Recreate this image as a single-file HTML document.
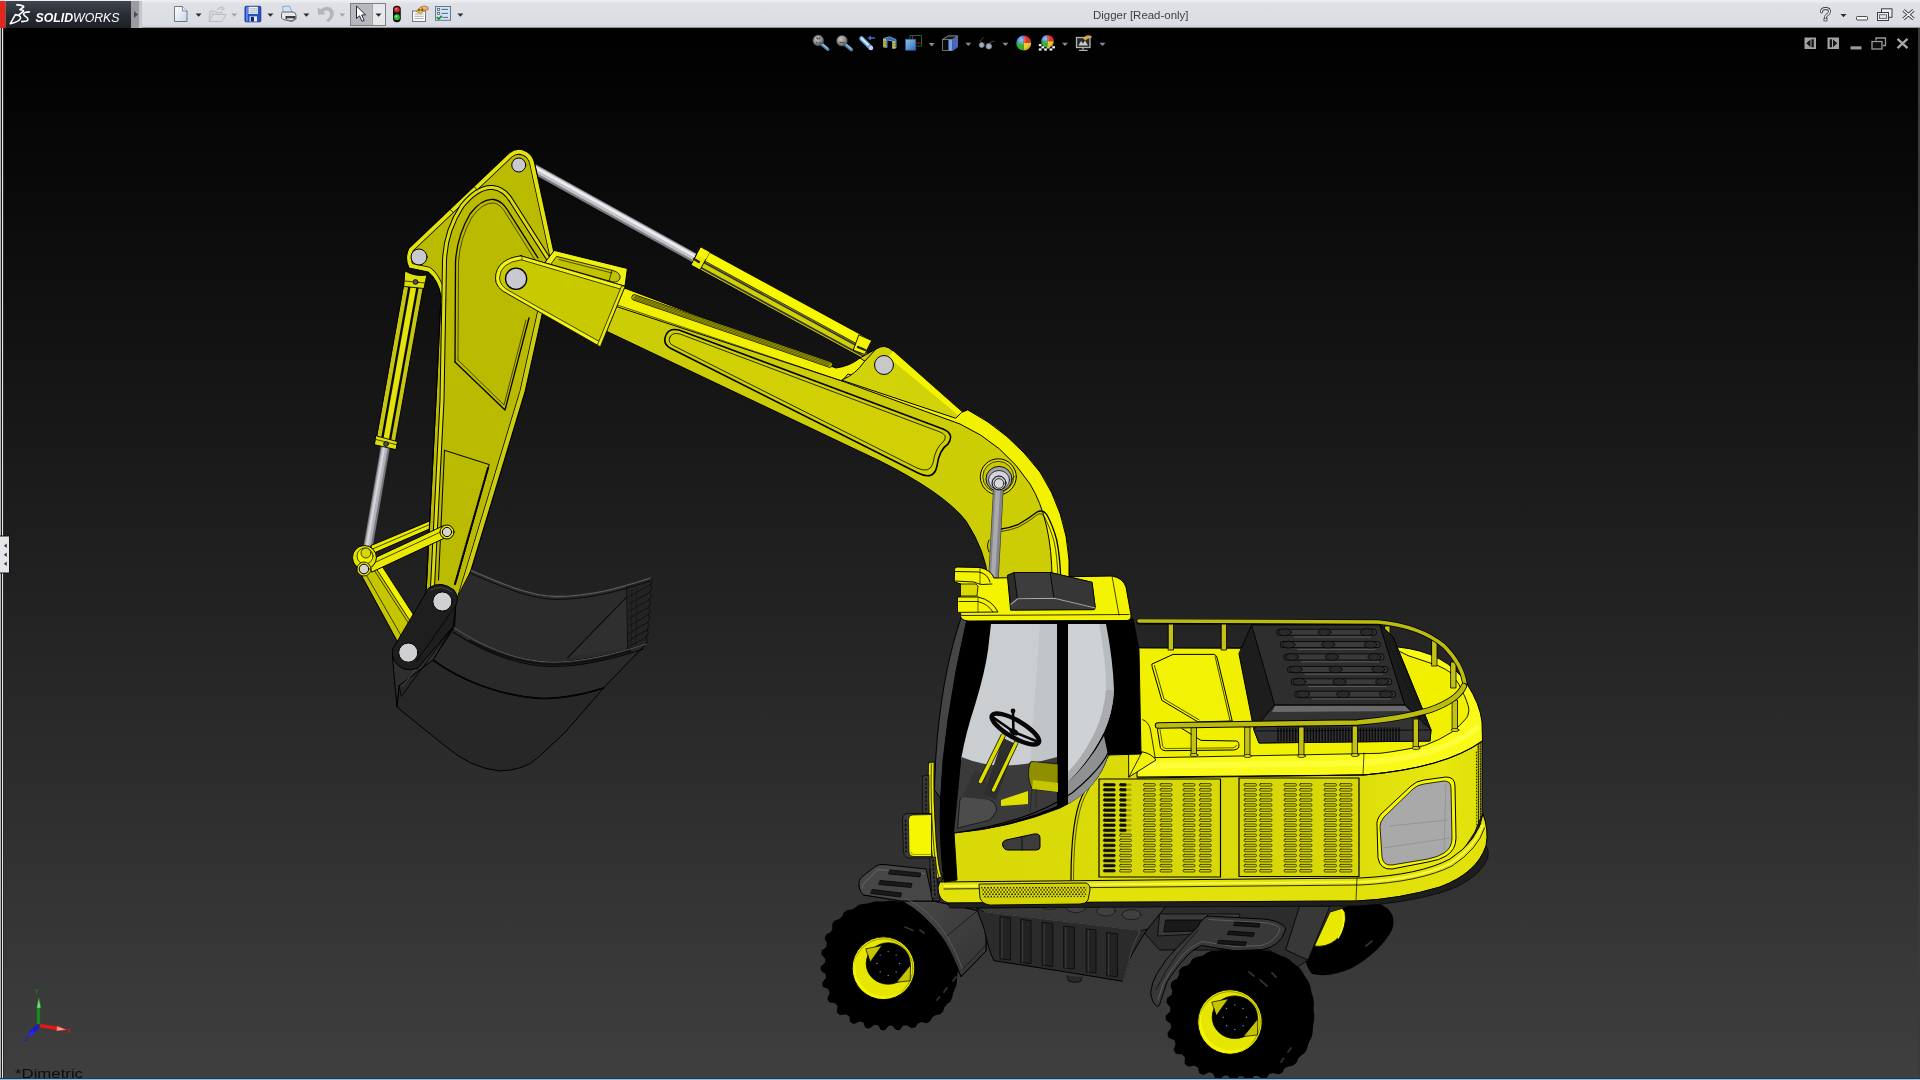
<!DOCTYPE html>
<html lang="en">
<head>
<meta charset="utf-8">
<title>Digger [Read-only] - SOLIDWORKS</title>
<style>
html,body{margin:0;padding:0;width:1920px;height:1080px;overflow:hidden;background:#000;font-family:"Liberation Sans",sans-serif;}
#view{position:absolute;left:0;top:0;display:block;will-change:transform;}
text{white-space:pre;}
</style>
</head>
<body>
<svg id="view" width="1920" height="1080" viewBox="0 0 1920 1080">
<!-- s00_bg.svg -->
<defs>
<linearGradient id="bg" x1="0" y1="0" x2="0" y2="1"><stop offset="0" stop-color="#000"/><stop offset="1" stop-color="#3f3f3f"/></linearGradient>
</defs>
<rect x="0" y="28" width="1920" height="1052" fill="url(#bg)"/>
<defs>
<pattern id="perf" width="3.200" height="4.400" patternUnits="userSpaceOnUse"><rect width="3.200" height="4.400" fill="#e2e214"/><circle cx="0.900" cy="1.100" r="0.850" fill="#1c1c00"/><circle cx="2.500" cy="3.300" r="0.850" fill="#1c1c00"/></pattern>
</defs>
<defs><linearGradient id="fend" x1="0" y1="0" x2="1" y2="1"><stop offset="0" stop-color="#484848"/><stop offset="1" stop-color="#343434"/></linearGradient></defs>
<defs><linearGradient id="side" gradientUnits="userSpaceOnUse" x1="950" y1="0" x2="1485" y2="0"><stop offset="0" stop-color="#d9d908"/><stop offset="0.75" stop-color="#dcdc0a"/><stop offset="0.92" stop-color="#e8e80e"/><stop offset="1" stop-color="#dede0a"/></linearGradient></defs>

<!-- s10_arm.svg -->
<g id="arm" stroke="#000" stroke-width="1" stroke-linejoin="round" stroke-linecap="round">
<!-- bucket cylinder (left) body behind stick -->
<g id="cylL">
  <path d="M385.500,446 L367.500,550" stroke="#77777c" stroke-width="9.200" fill="none" stroke-linecap="butt"/>
  <path d="M385,446 L367,550" stroke="#b4b4b9" stroke-width="6" fill="none" stroke-linecap="butt"/>
  <path d="M384.300,446 L366.300,550" stroke="#d6d6dc" stroke-width="2" fill="none" stroke-linecap="butt"/>
  <path d="M404.200,284 L423.700,285 L395.400,441.600 L377,436.800 Z" fill="#c6c610"/>
  <path d="M411.500,284.500 L416.500,284.700 L388.300,439.800 L383.700,438.600 Z" fill="#e4e40c" stroke="none"/>
  <path d="M409.800,284.300 L382.300,438.200" fill="none" stroke="#0a0a00" stroke-width="2.300"/>
  <path d="M418,284.700 L390,440.200" fill="none" stroke="#0a0a00" stroke-width="2.300"/>
  <path d="M376,435.800 L397.400,441.600 L396,449.600 L374.800,444.800 Z" fill="#dede08" stroke-width="0.900"/>
  <path d="M376,439.500 L396.800,444.800" fill="none" stroke-width="0.700"/>
  <circle cx="386" cy="444" r="2.400" fill="#555" stroke-width="0.800"/>
</g>
<!-- stick cylinder rod + body (top) -->
<g id="cylT">
  <path d="M529,166 L702,262" stroke="#7c7c80" stroke-width="9.500" fill="none" stroke-linecap="butt"/>
  <path d="M529.300,165.400 L702.300,261.400" stroke="#c2c2c8" stroke-width="6.500" fill="none" stroke-linecap="butt"/>
  <path d="M529.800,164.600 L702.800,260.600" stroke="#ececf2" stroke-width="2.600" fill="none" stroke-linecap="butt"/>
  <path d="M700.800,247.500 L871.700,340.500 L862.100,358.100 L691.200,265.100 Z" fill="#c4c400"/>
  <path d="M700.800,247.500 L871.700,340.500 L866.900,349.300 L696,256.300 Z" fill="#f8f800" stroke-width="0.800"/>
  <path d="M695.300,257.800 L866.200,350.800" fill="none" stroke="#33333c" stroke-width="1.700"/>
  <path d="M692.400,263.100 L863.300,356.100" fill="none" stroke="#33333c" stroke-width="1.700"/>
  <path d="M693.800,260.400 L864.800,353.400" fill="none" stroke="#d2d200" stroke-width="3.400"/>
  <path d="M700.800,247.500 L709.600,252.300 L700,270 L691.200,265.100 Z" fill="#eaea00" stroke-width="0.900"/>
  <path d="M700.800,247.500 L709.600,252.300 L706,259 L697,254.500 Z" fill="#f8f800" stroke="none"/>
  <path d="M859.200,335 L871.700,340.500 L864.700,354.400 L853.600,350.300 Z" fill="#f4f400" stroke-width="0.900"/>
  <path d="M858,347 L865,350" stroke="#222" stroke-width="2.400" fill="none"/>
  <path d="M694,259 L699,262" stroke="#222" stroke-width="2.400" fill="none"/>
</g>
<!-- boom main -->
<g id="boom">
  <path d="M627,289 L836,368 Q850,366 860,358 L876,349 Q885,343 893,351 L962,412 L968,410 Q1010,432 1040,472 Q1066,512 1069,560 L1069,580 L988,580 Q986,552 966,521 Q944,493 880,461 L606,331 L598,300 L610,283 Z" fill="#cdcd06"/>
  <!-- top face bright -->
  <path d="M627,289 L836,368 Q850,366 860,358 L866,362 Q856,376 842,381 L612,305 L610,283 Z" fill="#f0f000"/>
  <path d="M968,410 Q1010,432 1040,472 Q1066,512 1069,560 L1069,580 L1052,580 Q1052,520 1030,484 Q1004,444 960,424 L842,381 L848,374 L962,412 Z" fill="#f2f200"/>
  <!-- bracket for cylinder -->
  <path d="M842,380 Q856,374 864,362 L876,349 Q885,343 893,351 L962,412 L956,418 Z" fill="#d2d208"/>
  <path d="M893,351 L962,412 L958,415 L888,357 Z" fill="#f4f400" stroke="none"/>
  <!-- inner pocket lines -->
  <path d="M666,335 Q662,344 671,348.500 L918,473 Q934,481 937,466 Q939,450 948,444 Q955,434 943,429 L679,330 Q669,328 666,335 Z" fill="#d0d004" stroke-width="1.600"/>
  <path d="M670,337 Q667,343 674,346 L917,468 Q930,474 933,463 Q935,448 944,441 Q948,435 940,432 L680,334 Q672,332 670,337 Z" fill="none" stroke-width="0.800"/>
  <path d="M634.500,297.500 L829.500,364.500" fill="none" stroke="#1a1a00" stroke-width="6.200" stroke-linecap="round"/>
  <path d="M634.500,297.500 L829.500,364.500" fill="none" stroke="#b0b000" stroke-width="4.800" stroke-linecap="round"/>
  <path d="M635.200,296.200 L830.200,363.200 M634.500,297.500 L829.500,364.500 M633.800,298.800 L828.800,365.800" fill="none" stroke="#2a2a00" stroke-width="0.600"/>
  <path d="M613,303.500 L842,381" fill="none" stroke="#1a1a00" stroke-width="0.700"/>
  <!-- lower curved pocket -->
  <path d="M1001,529 Q1010,528 1017.800,524.700 Q1028,519 1037,512 Q1043,509 1047,515 Q1053,526 1056.700,540 Q1060,556 1060.800,580" fill="none" stroke-width="1.300"/>
  <path d="M1001,531.500 Q1010,530.500 1018.500,527 Q1029,521.500 1037.500,514.500 Q1041.500,512 1044.500,517 Q1050,527 1054,541 Q1057.500,557 1058,580" fill="none" stroke-width="0.700"/>
  <path d="M989,540 Q986,546 989,552" fill="none" stroke-width="0.900"/>
  <!-- boom pivot -->
  <circle cx="998.300" cy="476.800" r="18" fill="#dcdc10" stroke-width="1"/>
  <circle cx="998.300" cy="476.800" r="15.500" fill="#c8c800" stroke-width="0.700"/>
  <ellipse cx="999" cy="478.900" rx="13" ry="12.500" fill="#a4a4a8" stroke-width="0.900"/>
  <ellipse cx="999" cy="480" rx="10.500" ry="9.500" fill="#d4d4da" stroke-width="0.700"/>
  <path d="M998.300,490 L993.500,578" stroke="#3a3a3e" stroke-width="10.500" fill="none" stroke-linecap="butt"/>
  <path d="M998.300,490 L993.500,578" stroke="#85858a" stroke-width="9.300" fill="none" stroke-linecap="butt"/>
  <path d="M997.800,490 L993,578" stroke="#a9a9ae" stroke-width="4.500" fill="none" stroke-linecap="butt"/>
  <circle cx="999" cy="483" r="7" fill="#bebec4" stroke-width="1"/>
  <circle cx="999" cy="483.500" r="4.800" fill="#d8d8de" stroke-width="0.700"/>
  <circle cx="884" cy="365" r="9.5" fill="#c8c8c8"/>
</g>
<!-- upper link bar (behind stick) -->
<path d="M371,545.500 L432,520 L434,527 L374,553 Z" fill="#eaea00"/>
<path d="M372.500,549 L433,523" fill="none" stroke-width="0.700"/>
<!-- stick -->
<g id="stick">
  <clipPath id="stickclip"><path d="M509,153 Q519,145 530,154 Q534,158 535,165 L556,262 L542,315 L525,392 L462,600 L426,594 L437,380 L441,296 Q438,280 428,272 L409,268 Q404,258 409,248 Z"/></clipPath>
  <path d="M509,153 Q519,145 530,154 Q534,158 535,165 L556,262 L542,315 L525,392 L462,600 L426,594 L437,380 L441,296 Q438,280 428,272 L409,268 Q404,258 409,248 Z" fill="#baba00"/>
  <!-- bright edge band on upper edges -->
  <g clip-path="url(#stickclip)">
    <path d="M441,300 Q438,280 428,272 L409,268 Q404,258 409,248 L509,153 Q519,145 530,154 Q534,158 535,165 L556,262" fill="none" stroke="#000" stroke-width="10.500"/>
    <path d="M441,300 Q438,280 428,272 L409,268 Q404,258 409,248 L509,153 Q519,145 530,154 Q534,158 535,165 L556,262" fill="none" stroke="#e2e20e" stroke-width="9"/>
    <path d="M556,262 L542,315 L525,392 L462,600" fill="none" stroke="#000" stroke-width="11" stroke-dasharray="2.500,1.500"/>
    <path d="M556,262 L542,315 L525,392 L462,600" fill="none" stroke="#cccc10" stroke-width="9.500"/>
  </g>
  <path d="M509,153 Q519,145 530,154 Q534,158 535,165 L556,262 L542,315 L525,392 L462,600 L426,594 L437,380 L441,296 Q438,280 428,272 L409,268 Q404,258 409,248 Z" fill="none" stroke-width="1.100"/>
  <!-- raised rib -->
  <path d="M432,597 L442,400 L444.500,262 Q445,232 462,206 Q478,186 493,187.500 Q505,189 512.500,202.500 L551,263" fill="none" stroke="#000" stroke-width="5"/>
  <path d="M432,597 L442,400 L444.500,262 Q445,232 462,206 Q478,186 493,187.500 Q505,189 512.500,202.500 L551,263" fill="none" stroke="#dcdc0c" stroke-width="3" stroke-linecap="butt"/>
  <!-- pocket outline -->
  <path d="M455,362 L455.500,262 Q457,236 470,214 Q482,198 494,199.500 Q502,201 507.500,210 L538,258" fill="none" stroke-width="1.300"/>
  <path d="M455,362 L505,410 L529,318" fill="none" stroke-width="1.300"/>
  <path d="M458,360 L458.500,262 Q460,238 472,217 Q483,202 494,203 Q500,204 505,212 L535,260" fill="none" stroke-width="0.600"/>
  <path d="M458,360 L504,405 L526,320" fill="none" stroke-width="0.600"/>
  <!-- seams -->
  <path d="M472,184 L477,190 M447,207 L453,212" fill="none" stroke-width="0.800"/>
  <!-- lower plate outline -->
  <path d="M444.500,450.300 L489.300,464.600 L456,582 M444.500,450.300 L438.500,580" fill="none" stroke-width="1"/>
  <path d="M488,468 L455,584" fill="none" stroke="#000" stroke-width="2.200" stroke-dasharray="1,1.600"/>
  <circle cx="518.750" cy="165" r="7" fill="#c9c9d0"/>
  <circle cx="419" cy="257" r="8" fill="#c9c9d0"/>
</g>
<!-- cylinder cap at left pivot -->
<path d="M405.200,271 Q415,277 426.800,275 L424,288.500 L404,286.500 Z" fill="#dede08" stroke-width="0.900"/>
<path d="M404.600,281 L425,283" fill="none" stroke="#000" stroke-width="0.700"/>
<circle cx="415.500" cy="282" r="2.400" fill="#555" stroke="#000" stroke-width="0.800"/>
<!-- clevis -->
<g id="clevis">
  <!-- rear ear -->
  <path d="M554.600,250.500 L627.400,268.500 L625,286.300 L545,263 Z" fill="#f0f012"/>
  <path d="M557,256.500 L613,270.500 Q621,273 620,278 Q619,282.500 613,282 L551,264.500 Z" fill="#c2c200" stroke-width="0.800"/>
  <path d="M612,270.300 L609,281" fill="none" stroke-width="0.700"/>
  <path d="M559,259.500 L612,273" fill="none" stroke-width="0.600"/>
  <!-- front ear -->
  <path d="M520.900,255.900 L625,286.300 L600.300,346.700 L507.700,293.800 Q495.500,288 495.500,278 Q496.500,259 520.900,255.900 Z" fill="#c9c900"/>
  <path d="M520.900,255.900 L625,286.300 L623.600,290 L521.500,259.800 Q500,262.500 499.500,278 Q499.800,286 509.500,291 L602,343 L600.300,346.700 L507.700,293.800 Q495.500,288 495.500,278 Q496.500,259 520.900,255.900 Z" fill="#f2f214" stroke-width="0.700"/>
  <path d="M625,286.300 L600.300,346.700 L597.300,345 L621.400,286.500 Z" fill="#eaea10" stroke-width="0.700"/>
  <path d="M522,259.800 L522,256" fill="none" stroke-width="0.600"/>
  <circle cx="516.100" cy="278.700" r="10.600" fill="#c9c9d2" stroke-width="1.300"/>
</g>
<!-- bucket linkage -->
<g id="link">
  <!-- lower link to bucket bracket -->
  <path d="M360.500,573 L378,560 L422,628 L398,642 Z" fill="#c6c600"/>
  <path d="M373,563 L378,560 L422,628 L417,631 Z" fill="#f2f200" stroke-width="0.800"/>
  <path d="M370.500,564.500 L414.500,632.500" fill="none" stroke-width="0.700"/>
  <path d="M364,571 L403,639" fill="none" stroke-width="0.700"/>
  <!-- lower bar (in front of stick) -->
  <path d="M368,561 L444,525.500 L449,536 L372,572 Z" fill="#eaea00"/>
  <path d="M369.500,565 L446,529.500" fill="none" stroke-width="0.700"/>
  <!-- housing at left pivot -->
  <circle cx="364.500" cy="557.500" r="12" fill="#e2e200"/>
  <circle cx="365" cy="556" r="8" fill="#f2f200" stroke-width="0.700"/>
  <circle cx="366" cy="553" r="5" fill="#d8d800" stroke-width="0.700"/>
  <circle cx="364" cy="569" r="7" fill="#e4e400" stroke-width="0.800"/>
  <circle cx="364" cy="569" r="4.800" fill="#d2d2d2"/>
  <circle cx="447" cy="532" r="7" fill="#e6e600"/>
  <circle cx="447" cy="532" r="4.600" fill="#d2d2d2"/>
</g>
</g>

<!-- s20_bucket.svg -->
<g id="bucket" stroke="#000" stroke-width="1" stroke-linejoin="round" stroke-linecap="round">
  <!-- inside back (visible interior) -->
  <path d="M471.500,570.600 C500,583 530,596 556,596.500 C595,596 625,586 650.400,578 L646,644 C610,656 575,662.500 550,662 C515,661 480,645 454.500,628 L456,600 Z" fill="#2b2b2b"/>
  <!-- side wall inside right -->
  <path d="M650.400,578 L641.900,581.300 L567.400,658 L646,644 Z" fill="#2f2f2f" stroke="none"/>
  <path d="M641.900,581.300 L567.400,658" fill="none" stroke="#0e0e0e" stroke-width="1.100"/>
  <!-- teeth -->
  <path d="M627,586 L650.400,578 L652.500,580 L650,585 L652,588 L649.500,592.500 L651.500,595.500 L649,600 L651,603 L648.500,607.500 L650.500,610.500 L648,615 L650,618 L647.500,622.500 L649.500,625.500 L647,630 L648.500,633 L646,637.500 L647.500,640.500 L646,644 L628,649 Z" fill="#242424" stroke="#0a0a0a" stroke-width="0.800"/>
  <path d="M650,585 L630,596 M649.500,592.500 L629.500,603.500 M649,600 L629,611 M648.500,607.500 L628.800,618.500 M648,615 L628.600,626 M647.500,622.500 L628.400,633.500 M647,630 L628.200,641 M646,637.500 L628,647" fill="none" stroke="#0c0c0c" stroke-width="0.800"/>
  <path d="M632,590 L631,646 M637,587 L636,645" fill="none" stroke="#151515" stroke-width="0.700"/>
  <!-- front band -->
  <path d="M454.500,628 C480,645 515,661 550,662 C575,662.500 610,656 646,644 L603.500,688 C580,696 555,699 540,698.400 C500,696 460,680 433,660 Z" fill="#2a2a2a"/>
  <!-- bottom shell -->
  <path d="M433,660 C460,680 500,696 540,698.400 C555,699 580,696 603.500,688 L565,732.400 L537.500,758 Q525,770 500,771 Q470,768 444,745 Q415,722 397,707 L399,685.600 Z" fill="#272727"/>
  <!-- top rim highlight -->
  <path d="M471.500,570.600 C500,583 530,596 556,596.500 C595,596 625,586 650.400,578" fill="none" stroke="#5c5c5c" stroke-width="1.300"/>
  <path d="M471,573.600 C500,586 530,599 556,599.500 C595,599 625,589 650,581" fill="none" stroke="#0a0a0a" stroke-width="1"/>
  <!-- lower rim -->
  <path d="M454.500,628 C480,645 515,661 550,662 C575,662.500 610,656 646,644" fill="none" stroke="#555" stroke-width="1.200"/>
  <path d="M453,632 C480,649.500 515,665.500 550,666.500 C575,667 610,660.500 643,649" fill="none" stroke="#080808" stroke-width="1.100"/>
  <path d="M470,641 C500,656 525,663.500 550,664.300 C575,664.800 600,660 630,651" fill="none" stroke="#111" stroke-width="2.600" stroke-dasharray="0.800,2.200"/>
  <path d="M433,660 C460,680 500,696 540,698.400 C555,699 580,696 603.500,688" fill="none" stroke="#040404" stroke-width="1.700"/>
  <!-- left side plates -->
  <path d="M453.500,626 L433,660 L399,685.600 L397,707 L392.800,662 Q392,650 396,645 L440,592 Z" fill="#2e2e2e"/>
  <path d="M453.500,626 L401.300,696.300 L399,685.600" fill="none" stroke="#060606" stroke-width="1"/>
  <path d="M449,623 L403,686" fill="none" stroke="#484848" stroke-width="0.900"/>
  <!-- bracket -->
  <path d="M429,587.700 Q441,580 454,590 Q460,598 455.600,605.800 L453.500,626 L418,668 Q402,674 394,660 Q390,650 395,645 Z" fill="#1e1e1e"/>
  <path d="M431,590 Q441,584 452,592" fill="none" stroke="#4a4a4a" stroke-width="0.900"/>
  <path d="M455.600,605.800 L416,662" fill="none" stroke="#050505" stroke-width="0.900"/>
  <circle cx="442.400" cy="601.500" r="9.600" fill="#d0d0d2"/>
  <circle cx="408.300" cy="652.600" r="9.600" fill="#d0d0d2"/>
</g>

<!-- s25_under.svg -->
<g id="under" stroke="#000" stroke-width="1" stroke-linejoin="round" stroke-linecap="round">
  <!-- far rear wheel -->
  <path d="M1312,903 Q1350,896 1380,904 Q1398,912 1392,930 Q1380,952 1352,968 Q1330,978 1312,974 Q1300,960 1306,930 Z" fill="#000" stroke="none"/>
  <path d="M1316,903 Q1338,900 1345,912 Q1348,926 1336,940 Q1326,948 1314,946 Z" fill="#e8e800" stroke-width="0.8"/>
  <path d="M1340,906 Q1348,922 1338,938" fill="none" stroke="#f8f820" stroke-width="1.5"/>
  <!-- chassis beams between box and rear -->
  <path d="M1120,905 L1360,903 L1330,912 L1308,960 L1290,972 L1270,950 L1160,950 Z" fill="#2c2c2c" stroke-width="0.8"/>
  <path d="M1160,914 L1240,914 L1236,932 L1158,936 Z" fill="#3a3a3a" stroke-width="0.7"/>
  <path d="M1166,920 L1232,920 L1230,930 L1164,932 Z" fill="#1a1a1a" stroke-width="0.7"/>
  <path d="M1300,906 L1330,906 L1308,960 L1286,950 Z" fill="#383838" stroke-width="0.8"/>
  <path d="M1120,912 L1140,912 L1130,936 Q1126,950 1120,958 L1112,972 Z" fill="#353535" stroke-width="0.8"/>
  <!-- rear wheel tyre -->
  <path d="M1314.0,1013.5 L1314.3,1015.6 L1314.2,1017.8 L1314.2,1019.9 L1313.8,1022.0 L1313.3,1024.1 L1313.1,1026.2 L1312.8,1028.3 L1312.8,1030.5 L1312.6,1032.7 L1312.1,1034.8 L1311.6,1036.9 L1310.7,1038.9 L1309.7,1040.8 L1308.9,1042.8 L1308.0,1044.7 L1307.5,1046.9 L1306.9,1049.0 L1305.9,1050.9 L1304.7,1052.8 L1302.9,1054.2 L1301.0,1055.5 L1299.6,1057.1 L1298.1,1058.7 L1297.3,1060.7 L1296.4,1062.8 L1294.8,1064.2 L1293.1,1065.6 L1290.7,1066.2 L1288.2,1066.5 L1286.3,1067.5 L1284.5,1068.5 L1283.4,1070.5 L1282.3,1072.5 L1280.4,1073.4 L1278.4,1074.2 L1275.8,1073.7 L1273.1,1073.0 L1271.1,1073.5 L1269.2,1074.0 L1267.9,1076.0 L1266.6,1078.0 L1264.6,1078.4 L1262.6,1078.8 L1260.1,1077.4 L1257.7,1075.8 L1255.8,1076.0 L1253.9,1076.1 L1252.4,1078.2 L1250.8,1080.3 L1248.8,1080.5 L1246.9,1080.6 L1244.8,1078.5 L1242.8,1076.3 L1241.0,1076.2 L1239.2,1076.2 L1237.2,1078.5 L1235.1,1080.7 L1233.1,1080.7 L1231.2,1080.6 L1229.6,1078.2 L1228.1,1075.8 L1226.3,1075.6 L1224.4,1075.4 L1221.9,1077.4 L1219.2,1079.3 L1217.2,1078.9 L1215.2,1078.5 L1214.1,1076.0 L1213.1,1073.4 L1211.2,1072.9 L1209.3,1072.3 L1206.2,1073.7 L1203.1,1074.9 L1201.1,1074.1 L1199.2,1073.3 L1198.6,1070.5 L1198.2,1067.7 L1196.4,1066.7 L1194.6,1065.6 L1191.3,1066.2 L1188.0,1066.5 L1186.3,1065.2 L1184.6,1063.7 L1184.7,1060.7 L1185.0,1057.8 L1183.6,1056.2 L1182.3,1054.6 L1179.1,1054.2 L1175.9,1053.7 L1174.7,1051.8 L1173.5,1049.9 L1174.5,1046.9 L1175.7,1044.0 L1174.9,1042.0 L1174.1,1040.1 L1171.3,1038.9 L1168.5,1037.5 L1167.9,1035.4 L1167.4,1033.2 L1169.2,1030.5 L1171.1,1027.9 L1170.9,1025.9 L1170.7,1023.8 L1168.2,1022.0 L1165.8,1020.1 L1165.7,1017.9 L1165.7,1015.7 L1168.0,1013.5 L1170.2,1011.4 L1170.2,1009.4 L1170.3,1007.3 L1168.2,1005.0 L1166.4,1002.6 L1166.6,1000.4 L1167.0,998.2 L1169.2,996.5 L1171.5,994.9 L1171.9,992.8 L1172.4,990.8 L1171.3,988.1 L1170.4,985.4 L1171.2,983.4 L1172.1,981.4 L1174.5,980.1 L1176.9,978.9 L1177.9,977.1 L1179.0,975.3 L1179.1,972.8 L1179.3,970.3 L1180.7,968.6 L1182.2,967.0 L1184.7,966.3 L1187.1,965.6 L1188.7,964.2 L1190.3,962.8 L1191.3,960.8 L1192.5,959.0 L1194.3,957.9 L1196.2,956.9 L1198.6,956.5 L1200.9,956.2 L1202.8,955.4 L1204.6,954.6 L1206.2,953.3 L1207.9,952.2 L1209.9,951.6 L1211.9,951.1 L1214.1,951.0 L1216.1,950.9 L1218.1,950.5 L1220.0,950.2 L1221.9,949.6 L1223.7,949.1 L1225.7,948.9 L1227.6,948.7 L1229.6,948.8 L1231.5,949.0 L1233.4,948.9 L1235.3,948.8 L1237.2,948.5 L1239.1,948.2 L1241.0,948.2 L1242.9,948.2 L1244.8,948.5 L1246.7,948.8 L1248.6,948.9 L1250.5,949.0 L1252.4,948.8 L1254.4,948.7 L1256.3,948.9 L1258.3,949.1 L1260.1,949.6 L1262.0,950.2 L1263.9,950.5 L1265.9,950.9 L1267.9,951.0 L1270.0,951.3 L1272.0,951.8 L1273.9,952.4 L1275.8,953.3 L1277.5,954.3 L1279.5,955.0 L1281.4,955.9 L1283.4,956.5 L1285.4,957.3 L1287.3,958.3 L1289.1,959.5 L1290.7,960.8 L1292.2,962.3 L1293.9,963.6 L1295.5,965.0 L1297.3,966.3 L1299.0,967.6 L1300.5,969.2 L1301.9,970.9 L1302.9,972.8 L1303.9,974.7 L1305.1,976.5 L1306.2,978.3 L1307.5,980.1 L1308.6,982.0 L1309.5,984.0 L1310.3,986.0 L1310.7,988.1 L1311.1,990.3 L1311.6,992.4 L1312.1,994.5 L1312.8,996.5 L1313.4,998.6 L1313.7,1000.7 L1313.9,1002.8 L1313.8,1005.0 L1313.6,1007.1 L1313.7,1009.3 L1313.7,1011.4 Z" fill="#000" stroke="none"/>
<ellipse cx="1230.0" cy="1022.0" rx="32.3" ry="32.3" fill="#e6e600" stroke="#000" stroke-width="1"/>
<ellipse cx="1230.0" cy="1022.0" rx="30.3" ry="30.3" fill="none" stroke="#8a8a00" stroke-width="0.8"/>
<path d="M1205.8,1004.2 A30.3,30.3 0 0 0 1252.6,1042.0 A29.1,29.1 0 0 1 1205.8,1004.2 Z" fill="#f6f600" stroke="none"/>
<ellipse cx="1234.8" cy="1017.2" rx="22.6" ry="21.3" fill="#000" stroke="#000" stroke-width="0.8"/>
<path d="M1212.2,1002.0 L1228.4,998.7 L1216.4,1015.5 Z" fill="#c4c400" stroke="#000" stroke-width="0.7"/>
<path d="M1243.6,1036.2 L1257.8,1018.8 L1257.5,1034.6 Z" fill="#c4c400" stroke="#000" stroke-width="0.7"/>
<circle cx="1246.5" cy="1017.2" r="0.7" fill="#8a8ad0" stroke="none"/>
<circle cx="1243.1" cy="1025.8" r="0.7" fill="#8a8ad0" stroke="none"/>
<circle cx="1234.8" cy="1029.4" r="0.7" fill="#8a8ad0" stroke="none"/>
<circle cx="1226.6" cy="1025.8" r="0.7" fill="#8a8ad0" stroke="none"/>
<circle cx="1223.2" cy="1017.2" r="0.7" fill="#8a8ad0" stroke="none"/>
<circle cx="1226.6" cy="1008.5" r="0.7" fill="#8a8ad0" stroke="none"/>
<circle cx="1234.8" cy="1004.9" r="0.7" fill="#8a8ad0" stroke="none"/>
<circle cx="1243.1" cy="1008.5" r="0.7" fill="#8a8ad0" stroke="none"/>
  <!-- rear fender -->
  <path d="M1207.600,916 L1262.600,919 Q1276,920 1281,924.200 Q1287,927 1285,931 Q1280,946 1262.600,949.600 L1234,950.700 L1201.500,945.600 Q1192,950 1187.200,955.800 Q1174,970 1166.900,982.200 L1160.800,1000.600 Q1160,1006 1157.700,1006.700 Q1152,1004 1150.600,992.400 Q1152,982 1156.700,974 Q1166,958 1177,947.600 L1197.400,927.200 Q1202,918 1207.600,916 Z" fill="#383838"/>
  <path d="M1209,919.500 L1262,922.500 Q1278,924 1280,929 Q1276,942 1261,945.500 L1234,946.500 L1202,941.500 Q1188,948 1182,956 Q1170,970 1163,984 L1158,1000" fill="none" stroke="#606060" stroke-width="0.900"/>
  <path d="M1198,930 Q1186,944 1176,956 Q1164,972 1156,990" fill="none" stroke="#111" stroke-width="0.800"/>
  <g fill="#161616" stroke="#000" stroke-width="0.700">
    <path d="M1235,922 L1260,923.500 L1259,927.200 L1234,925.500 Z"/><path d="M1229,931 L1254.500,932.800 L1253,936.500 L1227.500,934.500 Z"/><path d="M1219,940.300 L1246.500,942 L1245,945.800 L1217.500,943.800 Z"/>
  </g>
  <!-- front wheel tyre -->
  <path d="M958.0,964.5 L958.3,966.5 L958.2,968.4 L958.2,970.4 L957.8,972.4 L957.4,974.3 L957.2,976.3 L957.0,978.2 L957.0,980.3 L956.9,982.3 L956.5,984.3 L956.1,986.2 L955.3,988.1 L954.4,989.9 L953.7,991.8 L953.0,993.6 L952.6,995.7 L952.2,997.8 L951.3,999.6 L950.4,1001.4 L948.8,1002.8 L947.0,1004.1 L945.8,1005.7 L944.5,1007.2 L943.8,1009.3 L943.1,1011.3 L941.7,1012.8 L940.2,1014.2 L937.9,1014.8 L935.6,1015.2 L933.9,1016.3 L932.2,1017.3 L931.3,1019.3 L930.3,1021.3 L928.5,1022.3 L926.7,1023.2 L924.1,1022.7 L921.6,1022.1 L919.7,1022.7 L917.9,1023.2 L916.7,1025.2 L915.4,1027.3 L913.5,1027.7 L911.6,1028.2 L909.1,1026.8 L906.8,1025.2 L904.9,1025.4 L903.1,1025.5 L901.6,1027.6 L900.1,1029.8 L898.2,1030.0 L896.2,1030.1 L894.2,1028.0 L892.3,1025.8 L890.5,1025.7 L888.7,1025.7 L886.8,1028.0 L884.7,1030.2 L882.8,1030.2 L880.9,1030.0 L879.4,1027.6 L878.0,1025.2 L876.1,1025.1 L874.3,1024.8 L871.9,1026.8 L869.2,1028.6 L867.3,1028.2 L865.4,1027.8 L864.3,1025.2 L863.4,1022.6 L861.6,1022.0 L859.8,1021.4 L856.9,1022.7 L853.8,1023.9 L852.0,1023.1 L850.1,1022.1 L849.7,1019.3 L849.4,1016.5 L847.8,1015.4 L846.2,1014.3 L843.1,1014.8 L839.9,1015.1 L838.3,1013.7 L836.8,1012.3 L837.2,1009.3 L837.6,1006.3 L836.4,1004.8 L835.3,1003.2 L832.2,1002.8 L829.2,1002.3 L828.2,1000.5 L827.2,998.6 L828.4,995.7 L829.7,992.8 L829.0,991.0 L828.4,989.2 L825.7,988.1 L823.0,986.9 L822.5,984.9 L822.1,982.8 L824.0,980.3 L826.0,977.8 L825.8,975.9 L825.6,974.0 L823.2,972.4 L820.8,970.6 L820.7,968.6 L820.7,966.5 L823.0,964.5 L825.2,962.6 L825.2,960.7 L825.2,958.8 L823.2,956.6 L821.3,954.4 L821.5,952.3 L821.8,950.3 L824.0,948.7 L826.2,947.3 L826.5,945.3 L826.9,943.4 L825.7,940.9 L824.7,938.3 L825.4,936.4 L826.1,934.5 L828.4,933.3 L830.6,932.2 L831.5,930.4 L832.4,928.7 L832.2,926.2 L832.3,923.7 L833.5,922.1 L834.9,920.5 L837.2,919.7 L839.4,919.0 L840.8,917.6 L842.2,916.2 L843.1,914.2 L844.0,912.3 L845.7,911.2 L847.5,910.1 L849.7,909.7 L851.9,909.4 L853.6,908.4 L855.4,907.6 L856.9,906.3 L858.5,905.1 L860.4,904.5 L862.3,903.9 L864.3,903.8 L866.3,903.7 L868.2,903.2 L870.1,902.8 L871.9,902.2 L873.7,901.7 L875.6,901.4 L877.4,901.2 L879.4,901.4 L881.3,901.5 L883.1,901.4 L885.0,901.3 L886.8,901.0 L888.6,900.7 L890.5,900.7 L892.4,900.7 L894.2,901.0 L896.0,901.3 L897.9,901.4 L899.7,901.5 L901.6,901.4 L903.6,901.2 L905.4,901.4 L907.3,901.7 L909.1,902.2 L910.9,902.8 L912.8,903.2 L914.7,903.6 L916.7,903.8 L918.7,904.1 L920.5,904.7 L922.4,905.3 L924.1,906.3 L925.8,907.3 L927.6,908.1 L929.4,909.0 L931.3,909.7 L933.2,910.5 L934.9,911.6 L936.5,912.8 L937.9,914.2 L939.3,915.7 L940.8,917.0 L942.2,918.5 L943.8,919.7 L945.4,921.1 L946.7,922.7 L947.9,924.3 L948.8,926.2 L949.6,928.1 L950.6,929.8 L951.5,931.6 L952.6,933.3 L953.6,935.1 L954.3,937.0 L955.0,938.9 L955.3,940.9 L955.6,942.9 L956.0,944.9 L956.4,946.8 L957.0,948.7 L957.5,950.7 L957.8,952.6 L958.0,954.6 L957.8,956.6 L957.6,958.6 L957.7,960.6 L957.7,962.5 Z" fill="#000" stroke="none"/>
<ellipse cx="883.5" cy="968.2" rx="31.4" ry="31.4" fill="#e6e600" stroke="#000" stroke-width="1"/>
<ellipse cx="883.5" cy="968.2" rx="29.4" ry="29.4" fill="none" stroke="#8a8a00" stroke-width="0.8"/>
<path d="M860.0,950.9 A29.4,29.4 0 0 0 905.5,987.7 A28.3,28.3 0 0 1 860.0,950.9 Z" fill="#f6f600" stroke="none"/>
<ellipse cx="888.2" cy="963.5" rx="22.0" ry="20.7" fill="#000" stroke="#000" stroke-width="0.8"/>
<path d="M866.2,948.7 L881.9,945.6 L870.3,961.9 Z" fill="#c4c400" stroke="#000" stroke-width="0.7"/>
<path d="M896.7,982.0 L910.5,965.1 L910.2,980.4 Z" fill="#c4c400" stroke="#000" stroke-width="0.7"/>
<circle cx="899.5" cy="963.5" r="0.7" fill="#8a8ad0" stroke="none"/>
<circle cx="896.2" cy="971.9" r="0.7" fill="#8a8ad0" stroke="none"/>
<circle cx="888.2" cy="975.4" r="0.7" fill="#8a8ad0" stroke="none"/>
<circle cx="880.2" cy="971.9" r="0.7" fill="#8a8ad0" stroke="none"/>
<circle cx="876.9" cy="963.5" r="0.7" fill="#8a8ad0" stroke="none"/>
<circle cx="880.2" cy="955.1" r="0.7" fill="#8a8ad0" stroke="none"/>
<circle cx="888.2" cy="951.6" r="0.7" fill="#8a8ad0" stroke="none"/>
<circle cx="896.2" cy="955.1" r="0.7" fill="#8a8ad0" stroke="none"/>
  <!-- tread marks -->
  <g stroke="#303030" stroke-width="1.800" fill="none" stroke-linecap="round">
    <path d="M905,927 L913,930.500 M920,930 L924,933 M953,981 L956,977 M944,992 L947,988 M937,1000 L939.500,997"/>
    <path d="M1249,972 L1254,976 M1260,980 L1267,986 M1272,973 L1276,977 M1288,1052 L1291,1048 M1281,1062 L1283.500,1058.500"/>
    <path d="M1366,946 L1372,941"/>
  </g>
  <!-- front fender -->
  <path d="M864,895 L901.500,901 Q924,912 943.700,939.700 Q953,955 961,976.600 L986,951 L986,924 Q984,914 975,910 L933,901 L929.600,869 L936.600,869 L940,901 L933,901 Z" fill="#3b3b3b"/>
  <path d="M901.500,901 L933,901 L975,910 Q984,914 986,924 L986,951 L961,976.600 Q953,955 943.700,939.700 Q924,912 901.500,901 Z" fill="url(#fend)"/>
  <path d="M859,886 Q858,880 863,876 L876,866 Q879,864 884,864.500 L926,869 L933,901 L901.500,901 L864,895 Q860,893 859,886 Z" fill="#464646"/>
  <path d="M862,888 Q862,884 866,881 L878,869.500 L925,873.500" fill="none" stroke="#6a6a6a" stroke-width="0.900"/>
  <path d="M905,898 Q928,908 947,936 Q956,952 963,970" fill="none" stroke="#5e5e5e" stroke-width="0.900"/>
  <path d="M947,936 L976,912 M962,970 L985,946" fill="none" stroke="#141414" stroke-width="0.800"/>
  <g fill="#1a1a1a" stroke="#000" stroke-width="0.700">
    <path d="M890,870 L920.800,873 L920,877 L889,874 Z"/><path d="M880.400,880.500 L912,883.500 L911,887.500 L879,884.500 Z"/><path d="M872.400,889.500 L901.500,893 L900.500,897 L871,893.500 Z"/>
  </g>
  <!-- centre box -->
  <path d="M976.900,908 L1166,906 L1147.500,929 Q1136,946 1128.800,960.600 L1123,981.300 L1060,971 L993.800,960.600 Q988,948 984.400,930 Z" fill="#2b2b2b"/>
  <path d="M976.900,908 L1166,906 L1147.500,929 L1140,930.600 L984.400,911.900 Z" fill="#393939" stroke-width="0.700"/>
  <path d="M984.400,911.900 L1140,930.600 Q1132,946 1128.800,960.600 L1123,981.300" fill="none" stroke="#4c4c4c" stroke-width="0.900"/>
  <g fill="#222" stroke="#0a0a0a" stroke-width="0.800">
    <path d="M1000.300,916.600 L1010.600,917.800 L1010.600,960 L1000.300,958.800 Z"/>
    <path d="M1021,919.400 L1031,920.600 L1031,963.700 L1021,962.500 Z"/>
    <path d="M1042.500,922.200 L1052.800,923.400 L1052.800,966.500 L1042.500,965.300 Z"/>
    <path d="M1064,926 L1074.400,927.200 L1074.400,969.200 L1064,968 Z"/>
    <path d="M1086.600,928.800 L1096,930 L1096,973 L1086.600,971.900 Z"/>
    <path d="M1107,932.500 L1117.500,933.700 L1117.500,976.800 L1107,975.600 Z"/>
  </g>
  <path d="M1002,918 V958 M1022.700,921 V962 M1044.200,924 V965 M1065.700,927.500 V968 M1088.300,930.500 V971.500 M1108.700,934 V975" stroke="#3e3e3e" stroke-width="1" fill="none"/>
  <g fill="#404040" stroke="#111" stroke-width="0.700">
    <ellipse cx="1050" cy="906" rx="8.500" ry="3.500"/><ellipse cx="1076" cy="908" rx="9.400" ry="4.600"/><ellipse cx="1106" cy="911" rx="9.400" ry="5"/><ellipse cx="1131.600" cy="914.700" rx="9.400" ry="5"/>
  </g>
  <path d="M1067,975.600 L1068.500,981 Q1074,983.500 1080.500,981.500 L1082,977" fill="#2a2a2a" stroke-width="0.700"/>
</g>

<!-- s30_body.svg -->
<g id="body" stroke="#000" stroke-width="1" stroke-linejoin="round" stroke-linecap="round">
  <!-- top silhouette in band colour -->
  <path d="M1137,648 L1398,647 Q1446,652 1467,684 Q1480,704 1482,722 L1482.500,742 Q1445,768 1364,775 L1137,778 Z" fill="#fafa18"/>
  <!-- deck top face -->
  <path d="M1137,648 L1395,649 L1408,655.600 L1437.800,665.600 Q1446,669 1451,673 Q1460,684 1464.400,695.600 Q1469,706 1468.900,711 Q1468,716 1466.700,717.800 Q1460,726 1452,732 Q1440,740 1424.400,745.600 Q1400,751 1380,753.300 L1137,758 Z" fill="#f0f000" stroke-width="0.900"/>
  <!-- side face incl. door -->
  <path d="M953,832 Q1030,822 1072,793 Q1100,770 1108,753 L1137,755 L1137,777 L1364,775 Q1445,768 1482,741 L1482,815 Q1470,852 1440,867 Q1400,878 1360,879 L942,883 Z" fill="url(#side)"/>
  <!-- rounded band highlight -->
  <path d="M1137,766 L1364,763 Q1440,757 1477,728" fill="none" stroke="#ffff58" stroke-width="6" opacity="0.550"/>
  <path d="M1137,778 L1364,775 Q1445,768 1482,741.500" fill="none" stroke-width="1"/>
  <path d="M1364,753 L1363,775" fill="none" stroke-width="0.700"/>
  <!-- corner piece next to cab -->
  <path d="M1129,752 L1143,752 Q1152,754 1156,760 L1129,777 Z" fill="#f0f008" stroke-width="0.900"/>
  <path d="M1129,777 L1142,752" fill="none" stroke-width="0.800"/>
  <!-- bottom band -->
  <path d="M940,882 L1360,878 Q1420,875 1450,859 Q1478,841 1483,814 Q1489,830 1486,846 Q1477,873 1440,887 Q1400,899 1357,901 L948,903 Q938,900 938,888 Z" fill="#e2e20a"/>
  <path d="M944,889 L1360,885 Q1420,882 1452,866 Q1478,849 1484.500,828" fill="none" stroke-width="0.800"/>
  <path d="M944,886 L1360,882 Q1420,879 1451,863 Q1476,846 1483,824" fill="none" stroke="#ffff60" stroke-width="2" opacity="0.700" stroke-linecap="butt"/>
  <path d="M1357,878 L1356,901" fill="none" stroke-width="0.7"/>
  <!-- dark underside lip -->
  <path d="M948,903 L1357,901 Q1400,899 1440,887 Q1477,873 1486,846 Q1490,852 1487,860 Q1476,882 1440,893 Q1400,904 1357,906 L950,908 Z" fill="#1e1e1e" stroke-width="0.6"/>
  <!-- door edge line -->
  <path d="M1107,754 Q1092,775 1082,796 Q1071,820 1071,880" fill="none" stroke-width="1.200"/>
  <path d="M1109.500,755 Q1094.500,776 1084.500,797 Q1073.500,821 1073.500,880" fill="none" stroke-width="0.600"/>
  <!-- door handle -->
  <path d="M1003,846 Q1001,842 1006,840 L1034,834 Q1040,833 1040,838 L1040,847 Q1040,850 1036,850 L1008,850 Q1004,850 1003,846 Z" fill="#3c3c3c"/>
  <path d="M1022,837 L1022,850" fill="none" stroke-width="0.7"/>
  <!-- vent panels -->
  <rect x="1099" y="779" width="121.500" height="98" fill="#d7d709" stroke-width="1.200"/>
  <rect x="1239" y="778" width="120" height="98.500" fill="#d7d709" stroke-width="1.200"/>
  <g stroke="#161600" stroke-width="0.7">
<rect x="1103.3" y="783.6" width="12" height="2.5" rx="1.25" fill="#0c0c00"/>
<rect x="1103.3" y="788.6" width="12" height="2.5" rx="1.25" fill="#0c0c00"/>
<rect x="1103.3" y="793.7" width="12" height="2.5" rx="1.25" fill="#0c0c00"/>
<rect x="1103.3" y="798.8" width="12" height="2.5" rx="1.25" fill="#0c0c00"/>
<rect x="1103.3" y="803.8" width="12" height="2.5" rx="1.25" fill="#0c0c00"/>
<rect x="1103.3" y="808.9" width="12" height="2.5" rx="1.25" fill="#0c0c00"/>
<rect x="1103.3" y="813.9" width="12" height="2.5" rx="1.25" fill="#0c0c00"/>
<rect x="1103.3" y="819.0" width="12" height="2.5" rx="1.25" fill="#0c0c00"/>
<rect x="1103.3" y="824.0" width="12" height="2.5" rx="1.25" fill="#0c0c00"/>
<rect x="1103.3" y="829.1" width="12" height="2.5" rx="1.25" fill="#0c0c00"/>
<rect x="1103.3" y="834.1" width="12" height="2.5" rx="1.25" fill="#0c0c00"/>
<rect x="1103.3" y="839.1" width="12" height="2.5" rx="1.25" fill="#0c0c00"/>
<rect x="1103.3" y="844.2" width="12" height="2.5" rx="1.25" fill="#0c0c00"/>
<rect x="1103.3" y="849.2" width="12" height="2.5" rx="1.25" fill="#0c0c00"/>
<rect x="1103.3" y="854.3" width="12" height="2.5" rx="1.25" fill="#0c0c00"/>
<rect x="1103.3" y="859.4" width="12" height="2.5" rx="1.25" fill="#0c0c00"/>
<rect x="1103.3" y="864.4" width="12" height="2.5" rx="1.25" fill="#0c0c00"/>
<rect x="1103.3" y="869.5" width="12" height="2.5" rx="1.25" fill="#0c0c00"/>
<rect x="1119.5" y="783.6" width="7" height="2.5" rx="1.25" fill="#0c0c00"/>
<rect x="1126.5" y="783.6" width="5" height="2.5" rx="1.25" fill="#a8a800" stroke="none"/>
<rect x="1119.5" y="788.6" width="7" height="2.5" rx="1.25" fill="#0c0c00"/>
<rect x="1126.5" y="788.6" width="5" height="2.5" rx="1.25" fill="#a8a800" stroke="none"/>
<rect x="1119.5" y="793.7" width="7" height="2.5" rx="1.25" fill="#0c0c00"/>
<rect x="1126.5" y="793.7" width="5" height="2.5" rx="1.25" fill="#a8a800" stroke="none"/>
<rect x="1119.5" y="798.8" width="7" height="2.5" rx="1.25" fill="#0c0c00"/>
<rect x="1126.5" y="798.8" width="5" height="2.5" rx="1.25" fill="#a8a800" stroke="none"/>
<rect x="1119.5" y="803.8" width="7" height="2.5" rx="1.25" fill="#0c0c00"/>
<rect x="1126.5" y="803.8" width="5" height="2.5" rx="1.25" fill="#a8a800" stroke="none"/>
<rect x="1119.5" y="808.9" width="7" height="2.5" rx="1.25" fill="#0c0c00"/>
<rect x="1126.5" y="808.9" width="5" height="2.5" rx="1.25" fill="#a8a800" stroke="none"/>
<rect x="1119.5" y="813.9" width="7" height="2.5" rx="1.25" fill="#0c0c00"/>
<rect x="1126.5" y="813.9" width="5" height="2.5" rx="1.25" fill="#a8a800" stroke="none"/>
<rect x="1119.5" y="819.0" width="7" height="2.5" rx="1.25" fill="#0c0c00"/>
<rect x="1126.5" y="819.0" width="5" height="2.5" rx="1.25" fill="#a8a800" stroke="none"/>
<rect x="1119.5" y="824.0" width="7" height="2.5" rx="1.25" fill="#0c0c00"/>
<rect x="1126.5" y="824.0" width="5" height="2.5" rx="1.25" fill="#a8a800" stroke="none"/>
<rect x="1119.5" y="829.1" width="7" height="2.5" rx="1.25" fill="#0c0c00"/>
<rect x="1126.5" y="829.1" width="5" height="2.5" rx="1.25" fill="#a8a800" stroke="none"/>
<rect x="1119.5" y="834.1" width="12" height="2.5" rx="1.25" fill="#cccc06"/>
<rect x="1119.5" y="839.1" width="12" height="2.5" rx="1.25" fill="#cccc06"/>
<rect x="1119.5" y="844.2" width="12" height="2.5" rx="1.25" fill="#cccc06"/>
<rect x="1119.5" y="849.2" width="12" height="2.5" rx="1.25" fill="#cccc06"/>
<rect x="1119.5" y="854.3" width="12" height="2.5" rx="1.25" fill="#cccc06"/>
<rect x="1119.5" y="859.4" width="12" height="2.5" rx="1.25" fill="#cccc06"/>
<rect x="1119.5" y="864.4" width="12" height="2.5" rx="1.25" fill="#cccc06"/>
<rect x="1119.5" y="869.5" width="12" height="2.5" rx="1.25" fill="#cccc06"/>
<rect x="1143.4" y="783.6" width="12" height="2.5" rx="1.25" fill="#cccc06"/>
<rect x="1143.4" y="788.6" width="12" height="2.5" rx="1.25" fill="#cccc06"/>
<rect x="1143.4" y="793.7" width="12" height="2.5" rx="1.25" fill="#cccc06"/>
<rect x="1143.4" y="798.8" width="12" height="2.5" rx="1.25" fill="#cccc06"/>
<rect x="1143.4" y="803.8" width="12" height="2.5" rx="1.25" fill="#cccc06"/>
<rect x="1143.4" y="808.9" width="12" height="2.5" rx="1.25" fill="#cccc06"/>
<rect x="1143.4" y="813.9" width="12" height="2.5" rx="1.25" fill="#cccc06"/>
<rect x="1143.4" y="819.0" width="12" height="2.5" rx="1.25" fill="#cccc06"/>
<rect x="1143.4" y="824.0" width="12" height="2.5" rx="1.25" fill="#cccc06"/>
<rect x="1143.4" y="829.1" width="12" height="2.5" rx="1.25" fill="#cccc06"/>
<rect x="1143.4" y="834.1" width="12" height="2.5" rx="1.25" fill="#cccc06"/>
<rect x="1143.4" y="839.1" width="12" height="2.5" rx="1.25" fill="#cccc06"/>
<rect x="1143.4" y="844.2" width="12" height="2.5" rx="1.25" fill="#cccc06"/>
<rect x="1143.4" y="849.2" width="12" height="2.5" rx="1.25" fill="#cccc06"/>
<rect x="1143.4" y="854.3" width="12" height="2.5" rx="1.25" fill="#cccc06"/>
<rect x="1143.4" y="859.4" width="12" height="2.5" rx="1.25" fill="#cccc06"/>
<rect x="1143.4" y="864.4" width="12" height="2.5" rx="1.25" fill="#cccc06"/>
<rect x="1143.4" y="869.5" width="12" height="2.5" rx="1.25" fill="#cccc06"/>
<rect x="1160.0" y="783.6" width="12" height="2.5" rx="1.25" fill="#cccc06"/>
<rect x="1160.0" y="788.6" width="12" height="2.5" rx="1.25" fill="#cccc06"/>
<rect x="1160.0" y="793.7" width="12" height="2.5" rx="1.25" fill="#cccc06"/>
<rect x="1160.0" y="798.8" width="12" height="2.5" rx="1.25" fill="#cccc06"/>
<rect x="1160.0" y="803.8" width="12" height="2.5" rx="1.25" fill="#cccc06"/>
<rect x="1160.0" y="808.9" width="12" height="2.5" rx="1.25" fill="#cccc06"/>
<rect x="1160.0" y="813.9" width="12" height="2.5" rx="1.25" fill="#cccc06"/>
<rect x="1160.0" y="819.0" width="12" height="2.5" rx="1.25" fill="#cccc06"/>
<rect x="1160.0" y="824.0" width="12" height="2.5" rx="1.25" fill="#cccc06"/>
<rect x="1160.0" y="829.1" width="12" height="2.5" rx="1.25" fill="#cccc06"/>
<rect x="1160.0" y="834.1" width="12" height="2.5" rx="1.25" fill="#cccc06"/>
<rect x="1160.0" y="839.1" width="12" height="2.5" rx="1.25" fill="#cccc06"/>
<rect x="1160.0" y="844.2" width="12" height="2.5" rx="1.25" fill="#cccc06"/>
<rect x="1160.0" y="849.2" width="12" height="2.5" rx="1.25" fill="#cccc06"/>
<rect x="1160.0" y="854.3" width="12" height="2.5" rx="1.25" fill="#cccc06"/>
<rect x="1160.0" y="859.4" width="12" height="2.5" rx="1.25" fill="#cccc06"/>
<rect x="1160.0" y="864.4" width="12" height="2.5" rx="1.25" fill="#cccc06"/>
<rect x="1160.0" y="869.5" width="12" height="2.5" rx="1.25" fill="#cccc06"/>
<rect x="1183.0" y="783.6" width="12" height="2.5" rx="1.25" fill="#cccc06"/>
<rect x="1183.0" y="788.6" width="12" height="2.5" rx="1.25" fill="#cccc06"/>
<rect x="1183.0" y="793.7" width="12" height="2.5" rx="1.25" fill="#cccc06"/>
<rect x="1183.0" y="798.8" width="12" height="2.5" rx="1.25" fill="#cccc06"/>
<rect x="1183.0" y="803.8" width="12" height="2.5" rx="1.25" fill="#cccc06"/>
<rect x="1183.0" y="808.9" width="12" height="2.5" rx="1.25" fill="#cccc06"/>
<rect x="1183.0" y="813.9" width="12" height="2.5" rx="1.25" fill="#cccc06"/>
<rect x="1183.0" y="819.0" width="12" height="2.5" rx="1.25" fill="#cccc06"/>
<rect x="1183.0" y="824.0" width="12" height="2.5" rx="1.25" fill="#cccc06"/>
<rect x="1183.0" y="829.1" width="12" height="2.5" rx="1.25" fill="#cccc06"/>
<rect x="1183.0" y="834.1" width="12" height="2.5" rx="1.25" fill="#cccc06"/>
<rect x="1183.0" y="839.1" width="12" height="2.5" rx="1.25" fill="#cccc06"/>
<rect x="1183.0" y="844.2" width="12" height="2.5" rx="1.25" fill="#cccc06"/>
<rect x="1183.0" y="849.2" width="12" height="2.5" rx="1.25" fill="#cccc06"/>
<rect x="1183.0" y="854.3" width="12" height="2.5" rx="1.25" fill="#cccc06"/>
<rect x="1183.0" y="859.4" width="12" height="2.5" rx="1.25" fill="#cccc06"/>
<rect x="1183.0" y="864.4" width="12" height="2.5" rx="1.25" fill="#cccc06"/>
<rect x="1183.0" y="869.5" width="12" height="2.5" rx="1.25" fill="#cccc06"/>
<rect x="1199.3" y="783.6" width="12" height="2.5" rx="1.25" fill="#cccc06"/>
<rect x="1199.3" y="788.6" width="12" height="2.5" rx="1.25" fill="#cccc06"/>
<rect x="1199.3" y="793.7" width="12" height="2.5" rx="1.25" fill="#cccc06"/>
<rect x="1199.3" y="798.8" width="12" height="2.5" rx="1.25" fill="#cccc06"/>
<rect x="1199.3" y="803.8" width="12" height="2.5" rx="1.25" fill="#cccc06"/>
<rect x="1199.3" y="808.9" width="12" height="2.5" rx="1.25" fill="#cccc06"/>
<rect x="1199.3" y="813.9" width="12" height="2.5" rx="1.25" fill="#cccc06"/>
<rect x="1199.3" y="819.0" width="12" height="2.5" rx="1.25" fill="#cccc06"/>
<rect x="1199.3" y="824.0" width="12" height="2.5" rx="1.25" fill="#cccc06"/>
<rect x="1199.3" y="829.1" width="12" height="2.5" rx="1.25" fill="#cccc06"/>
<rect x="1199.3" y="834.1" width="12" height="2.5" rx="1.25" fill="#cccc06"/>
<rect x="1199.3" y="839.1" width="12" height="2.5" rx="1.25" fill="#cccc06"/>
<rect x="1199.3" y="844.2" width="12" height="2.5" rx="1.25" fill="#cccc06"/>
<rect x="1199.3" y="849.2" width="12" height="2.5" rx="1.25" fill="#cccc06"/>
<rect x="1199.3" y="854.3" width="12" height="2.5" rx="1.25" fill="#cccc06"/>
<rect x="1199.3" y="859.4" width="12" height="2.5" rx="1.25" fill="#cccc06"/>
<rect x="1199.3" y="864.4" width="12" height="2.5" rx="1.25" fill="#cccc06"/>
<rect x="1199.3" y="869.5" width="12" height="2.5" rx="1.25" fill="#cccc06"/>
<rect x="1244.0" y="783.6" width="12.5" height="2.5" rx="1.25" fill="#cccc06"/>
<rect x="1244.0" y="788.6" width="12.5" height="2.5" rx="1.25" fill="#cccc06"/>
<rect x="1244.0" y="793.7" width="12.5" height="2.5" rx="1.25" fill="#cccc06"/>
<rect x="1244.0" y="798.8" width="12.5" height="2.5" rx="1.25" fill="#cccc06"/>
<rect x="1244.0" y="803.8" width="12.5" height="2.5" rx="1.25" fill="#cccc06"/>
<rect x="1244.0" y="808.9" width="12.5" height="2.5" rx="1.25" fill="#cccc06"/>
<rect x="1244.0" y="813.9" width="12.5" height="2.5" rx="1.25" fill="#cccc06"/>
<rect x="1244.0" y="819.0" width="12.5" height="2.5" rx="1.25" fill="#cccc06"/>
<rect x="1244.0" y="824.0" width="12.5" height="2.5" rx="1.25" fill="#cccc06"/>
<rect x="1244.0" y="829.1" width="12.5" height="2.5" rx="1.25" fill="#cccc06"/>
<rect x="1244.0" y="834.1" width="12.5" height="2.5" rx="1.25" fill="#cccc06"/>
<rect x="1244.0" y="839.1" width="12.5" height="2.5" rx="1.25" fill="#cccc06"/>
<rect x="1244.0" y="844.2" width="12.5" height="2.5" rx="1.25" fill="#cccc06"/>
<rect x="1244.0" y="849.2" width="12.5" height="2.5" rx="1.25" fill="#cccc06"/>
<rect x="1244.0" y="854.3" width="12.5" height="2.5" rx="1.25" fill="#cccc06"/>
<rect x="1244.0" y="859.4" width="12.5" height="2.5" rx="1.25" fill="#cccc06"/>
<rect x="1244.0" y="864.4" width="12.5" height="2.5" rx="1.25" fill="#cccc06"/>
<rect x="1244.0" y="869.5" width="12.5" height="2.5" rx="1.25" fill="#cccc06"/>
<rect x="1259.5" y="783.6" width="12.5" height="2.5" rx="1.25" fill="#cccc06"/>
<rect x="1259.5" y="788.6" width="12.5" height="2.5" rx="1.25" fill="#cccc06"/>
<rect x="1259.5" y="793.7" width="12.5" height="2.5" rx="1.25" fill="#cccc06"/>
<rect x="1259.5" y="798.8" width="12.5" height="2.5" rx="1.25" fill="#cccc06"/>
<rect x="1259.5" y="803.8" width="12.5" height="2.5" rx="1.25" fill="#cccc06"/>
<rect x="1259.5" y="808.9" width="12.5" height="2.5" rx="1.25" fill="#cccc06"/>
<rect x="1259.5" y="813.9" width="12.5" height="2.5" rx="1.25" fill="#cccc06"/>
<rect x="1259.5" y="819.0" width="12.5" height="2.5" rx="1.25" fill="#cccc06"/>
<rect x="1259.5" y="824.0" width="12.5" height="2.5" rx="1.25" fill="#cccc06"/>
<rect x="1259.5" y="829.1" width="12.5" height="2.5" rx="1.25" fill="#cccc06"/>
<rect x="1259.5" y="834.1" width="12.5" height="2.5" rx="1.25" fill="#cccc06"/>
<rect x="1259.5" y="839.1" width="12.5" height="2.5" rx="1.25" fill="#cccc06"/>
<rect x="1259.5" y="844.2" width="12.5" height="2.5" rx="1.25" fill="#cccc06"/>
<rect x="1259.5" y="849.2" width="12.5" height="2.5" rx="1.25" fill="#cccc06"/>
<rect x="1259.5" y="854.3" width="12.5" height="2.5" rx="1.25" fill="#cccc06"/>
<rect x="1259.5" y="859.4" width="12.5" height="2.5" rx="1.25" fill="#cccc06"/>
<rect x="1259.5" y="864.4" width="12.5" height="2.5" rx="1.25" fill="#cccc06"/>
<rect x="1259.5" y="869.5" width="12.5" height="2.5" rx="1.25" fill="#cccc06"/>
<rect x="1284.0" y="783.6" width="12.5" height="2.5" rx="1.25" fill="#cccc06"/>
<rect x="1284.0" y="788.6" width="12.5" height="2.5" rx="1.25" fill="#cccc06"/>
<rect x="1284.0" y="793.7" width="12.5" height="2.5" rx="1.25" fill="#cccc06"/>
<rect x="1284.0" y="798.8" width="12.5" height="2.5" rx="1.25" fill="#cccc06"/>
<rect x="1284.0" y="803.8" width="12.5" height="2.5" rx="1.25" fill="#cccc06"/>
<rect x="1284.0" y="808.9" width="12.5" height="2.5" rx="1.25" fill="#cccc06"/>
<rect x="1284.0" y="813.9" width="12.5" height="2.5" rx="1.25" fill="#cccc06"/>
<rect x="1284.0" y="819.0" width="12.5" height="2.5" rx="1.25" fill="#cccc06"/>
<rect x="1284.0" y="824.0" width="12.5" height="2.5" rx="1.25" fill="#cccc06"/>
<rect x="1284.0" y="829.1" width="12.5" height="2.5" rx="1.25" fill="#cccc06"/>
<rect x="1284.0" y="834.1" width="12.5" height="2.5" rx="1.25" fill="#cccc06"/>
<rect x="1284.0" y="839.1" width="12.5" height="2.5" rx="1.25" fill="#cccc06"/>
<rect x="1284.0" y="844.2" width="12.5" height="2.5" rx="1.25" fill="#cccc06"/>
<rect x="1284.0" y="849.2" width="12.5" height="2.5" rx="1.25" fill="#cccc06"/>
<rect x="1284.0" y="854.3" width="12.5" height="2.5" rx="1.25" fill="#cccc06"/>
<rect x="1284.0" y="859.4" width="12.5" height="2.5" rx="1.25" fill="#cccc06"/>
<rect x="1284.0" y="864.4" width="12.5" height="2.5" rx="1.25" fill="#cccc06"/>
<rect x="1284.0" y="869.5" width="12.5" height="2.5" rx="1.25" fill="#cccc06"/>
<rect x="1299.5" y="783.6" width="12.5" height="2.5" rx="1.25" fill="#cccc06"/>
<rect x="1299.5" y="788.6" width="12.5" height="2.5" rx="1.25" fill="#cccc06"/>
<rect x="1299.5" y="793.7" width="12.5" height="2.5" rx="1.25" fill="#cccc06"/>
<rect x="1299.5" y="798.8" width="12.5" height="2.5" rx="1.25" fill="#cccc06"/>
<rect x="1299.5" y="803.8" width="12.5" height="2.5" rx="1.25" fill="#cccc06"/>
<rect x="1299.5" y="808.9" width="12.5" height="2.5" rx="1.25" fill="#cccc06"/>
<rect x="1299.5" y="813.9" width="12.5" height="2.5" rx="1.25" fill="#cccc06"/>
<rect x="1299.5" y="819.0" width="12.5" height="2.5" rx="1.25" fill="#cccc06"/>
<rect x="1299.5" y="824.0" width="12.5" height="2.5" rx="1.25" fill="#cccc06"/>
<rect x="1299.5" y="829.1" width="12.5" height="2.5" rx="1.25" fill="#cccc06"/>
<rect x="1299.5" y="834.1" width="12.5" height="2.5" rx="1.25" fill="#cccc06"/>
<rect x="1299.5" y="839.1" width="12.5" height="2.5" rx="1.25" fill="#cccc06"/>
<rect x="1299.5" y="844.2" width="12.5" height="2.5" rx="1.25" fill="#cccc06"/>
<rect x="1299.5" y="849.2" width="12.5" height="2.5" rx="1.25" fill="#cccc06"/>
<rect x="1299.5" y="854.3" width="12.5" height="2.5" rx="1.25" fill="#cccc06"/>
<rect x="1299.5" y="859.4" width="12.5" height="2.5" rx="1.25" fill="#cccc06"/>
<rect x="1299.5" y="864.4" width="12.5" height="2.5" rx="1.25" fill="#cccc06"/>
<rect x="1299.5" y="869.5" width="12.5" height="2.5" rx="1.25" fill="#cccc06"/>
<rect x="1324.0" y="783.6" width="12.5" height="2.5" rx="1.25" fill="#cccc06"/>
<rect x="1324.0" y="788.6" width="12.5" height="2.5" rx="1.25" fill="#cccc06"/>
<rect x="1324.0" y="793.7" width="12.5" height="2.5" rx="1.25" fill="#cccc06"/>
<rect x="1324.0" y="798.8" width="12.5" height="2.5" rx="1.25" fill="#cccc06"/>
<rect x="1324.0" y="803.8" width="12.5" height="2.5" rx="1.25" fill="#cccc06"/>
<rect x="1324.0" y="808.9" width="12.5" height="2.5" rx="1.25" fill="#cccc06"/>
<rect x="1324.0" y="813.9" width="12.5" height="2.5" rx="1.25" fill="#cccc06"/>
<rect x="1324.0" y="819.0" width="12.5" height="2.5" rx="1.25" fill="#cccc06"/>
<rect x="1324.0" y="824.0" width="12.5" height="2.5" rx="1.25" fill="#cccc06"/>
<rect x="1324.0" y="829.1" width="12.5" height="2.5" rx="1.25" fill="#cccc06"/>
<rect x="1324.0" y="834.1" width="12.5" height="2.5" rx="1.25" fill="#cccc06"/>
<rect x="1324.0" y="839.1" width="12.5" height="2.5" rx="1.25" fill="#cccc06"/>
<rect x="1324.0" y="844.2" width="12.5" height="2.5" rx="1.25" fill="#cccc06"/>
<rect x="1324.0" y="849.2" width="12.5" height="2.5" rx="1.25" fill="#cccc06"/>
<rect x="1324.0" y="854.3" width="12.5" height="2.5" rx="1.25" fill="#cccc06"/>
<rect x="1324.0" y="859.4" width="12.5" height="2.5" rx="1.25" fill="#cccc06"/>
<rect x="1324.0" y="864.4" width="12.5" height="2.5" rx="1.25" fill="#cccc06"/>
<rect x="1324.0" y="869.5" width="12.5" height="2.5" rx="1.25" fill="#cccc06"/>
<rect x="1339.5" y="783.6" width="12.5" height="2.5" rx="1.25" fill="#cccc06"/>
<rect x="1339.5" y="788.6" width="12.5" height="2.5" rx="1.25" fill="#cccc06"/>
<rect x="1339.5" y="793.7" width="12.5" height="2.5" rx="1.25" fill="#cccc06"/>
<rect x="1339.5" y="798.8" width="12.5" height="2.5" rx="1.25" fill="#cccc06"/>
<rect x="1339.5" y="803.8" width="12.5" height="2.5" rx="1.25" fill="#cccc06"/>
<rect x="1339.5" y="808.9" width="12.5" height="2.5" rx="1.25" fill="#cccc06"/>
<rect x="1339.5" y="813.9" width="12.5" height="2.5" rx="1.25" fill="#cccc06"/>
<rect x="1339.5" y="819.0" width="12.5" height="2.5" rx="1.25" fill="#cccc06"/>
<rect x="1339.5" y="824.0" width="12.5" height="2.5" rx="1.25" fill="#cccc06"/>
<rect x="1339.5" y="829.1" width="12.5" height="2.5" rx="1.25" fill="#cccc06"/>
<rect x="1339.5" y="834.1" width="12.5" height="2.5" rx="1.25" fill="#cccc06"/>
<rect x="1339.5" y="839.1" width="12.5" height="2.5" rx="1.25" fill="#cccc06"/>
<rect x="1339.5" y="844.2" width="12.5" height="2.5" rx="1.25" fill="#cccc06"/>
<rect x="1339.5" y="849.2" width="12.5" height="2.5" rx="1.25" fill="#cccc06"/>
<rect x="1339.5" y="854.3" width="12.5" height="2.5" rx="1.25" fill="#cccc06"/>
<rect x="1339.5" y="859.4" width="12.5" height="2.5" rx="1.25" fill="#cccc06"/>
<rect x="1339.5" y="864.4" width="12.5" height="2.5" rx="1.25" fill="#cccc06"/>
<rect x="1339.5" y="869.5" width="12.5" height="2.5" rx="1.25" fill="#cccc06"/>
</g>
  <!-- rear window -->
  <path d="M1377,826 Q1376,820 1381,814 L1411,786 Q1416,781 1424,780 L1446,777 Q1455,777 1455,786 L1456,838 Q1456,850 1446,856 Q1440,860 1428,862 L1392,869 Q1380,870 1378,858 Z" fill="#f6f600" stroke-width="1"/>
  <path d="M1380,826 Q1380,822 1384,817 L1413,789 Q1417,785 1424,784 L1444,781 Q1451,781 1451,788 L1452,838 Q1452,848 1444,853 Q1438,857 1428,859 L1392,865 Q1383,866 1382,857 Z" fill="#a9a9a9" stroke-width="0.8"/>
  <path d="M1383,848 L1450,838 M1390,826 L1448,820 M1446,784 L1444,850" fill="none" stroke="#8c8c8c" stroke-width="0.7"/>
  <!-- right edge hatching -->
  <path d="M1478.200,744 L1478.600,828" fill="none" stroke="#1a1a00" stroke-width="1.300" stroke-dasharray="1,1.500"/><path d="M1480.200,742 L1480.600,824" fill="none" stroke="#1a1a00" stroke-width="1.300" stroke-dasharray="1,1.500" stroke-dashoffset="1.200"/><path d="M1476.400,752 L1476.800,828" fill="none" stroke="#1a1a00" stroke-width="1" stroke-dasharray="0.800,2.200"/>
</g>

<!-- s35_deck.svg -->
<g id="deck" stroke="#000" stroke-width="1" stroke-linejoin="round" stroke-linecap="round">
  <!-- hatch outlines on deck -->
  <path d="M1152.200,664 L1173,654.400 L1214.400,654.400 Q1217,655.500 1217.400,658.900 L1232.200,721 L1198,721.900 L1161.900,700.400 L1152.200,667 Z" fill="#f2f204" stroke-width="1"/>
  <path d="M1154.500,665.500 L1164,699 L1199,719.800 M1215,656 L1230,720.500" fill="none" stroke-width="0.700"/>
  <path d="M1157.400,729.300 L1160.400,747.800 Q1161.500,750.700 1165.600,750.700 L1233.700,750 Q1239.500,749 1238.900,745.600 Q1239,741 1235.900,741 L1201,740.400 L1181.900,728.500" fill="none" stroke-width="1"/>
  <path d="M1160,729.500 L1162.800,746.500 Q1163.500,748.500 1166.500,748.500 L1233,747.800 Q1236.500,747.200 1236.500,745.500" fill="none" stroke-width="0.600"/>
  <path d="M1142.600,719.600 Q1149,722 1150.500,730 L1155,756.700" fill="none" stroke-width="0.800"/>
  <!-- rear rail posts (behind cover) -->
  <g stroke-width="0.800" fill="#c2c214">
    <rect x="1168.500" y="623" width="5" height="27"/>
    <rect x="1221.500" y="623" width="5" height="27"/>
    <rect x="1432" y="640" width="5" height="26"/>
    <rect x="1451" y="662" width="5" height="26"/>
    <rect x="1385" y="626" width="5" height="12"/>
  </g>
  <!-- rear rail -->
  <path d="M1139,621.800 L1378,622 Q1420,626 1444,646 Q1462,664 1465,684" fill="none" stroke="#000" stroke-width="5.200"/>
  <path d="M1139,621 L1378,622 Q1420,626 1444,646 Q1462,664 1465,684" fill="none" stroke="#bcbc10" stroke-width="3.600"/>
  <!-- engine cover -->
  <path d="M1252,625 L1380,625 L1393,637 L1431,730 L1430,741 L1259,743 L1254,730 L1239,654 Z" fill="#1d1d1d"/>
  <path d="M1252,625 L1380,625 L1405,705 L1275,705 Z" fill="#2e2e2e" stroke-width="0.8"/>
  <path d="M1380,625 L1393,637 L1431,730 L1405,705 Z" fill="#1c1c1c" stroke-width="0.8"/>
  <path d="M1275,705 L1405,705 L1431,730 L1430,741 L1259,743 L1254,730 Z" fill="#333" stroke-width="0.8"/>
  <path d="M1275,706 L1405,706 L1410,711 L1272,712 Z" fill="#6a6a6a" stroke="none"/>
  <path d="M1256,731 L1431,730" fill="none" stroke-width="0.8"/>
  <path d="M1279.7,632.2 L1373.3,632.2" stroke="#0c0c0c" stroke-width="7" fill="none"/>
<path d="M1279.7,632.2 L1373.3,632.2" stroke="#3a3a3a" stroke-width="5" fill="none"/>
<path d="M1293.9,637.0 L1370.9,637.0" stroke="#5a5a5a" stroke-width="1" fill="none"/>
<ellipse cx="1284.8" cy="632.2" rx="6.5" ry="3.4" fill="#2a2a2a" stroke="#0a0a0a" stroke-width="0.9"/>
<ellipse cx="1324.6" cy="632.2" rx="6.5" ry="3.4" fill="#2a2a2a" stroke="#0a0a0a" stroke-width="0.9"/>
<ellipse cx="1366.9" cy="632.2" rx="6.5" ry="3.4" fill="#2a2a2a" stroke="#0a0a0a" stroke-width="0.9"/>
<path d="M1283.3,644.6 L1377.1,644.6" stroke="#0c0c0c" stroke-width="7" fill="none"/>
<path d="M1283.3,644.6 L1377.1,644.6" stroke="#3a3a3a" stroke-width="5" fill="none"/>
<path d="M1297.6,649.4 L1374.8,649.4" stroke="#5a5a5a" stroke-width="1" fill="none"/>
<ellipse cx="1288.5" cy="644.6" rx="6.5" ry="3.4" fill="#2a2a2a" stroke="#0a0a0a" stroke-width="0.9"/>
<ellipse cx="1328.3" cy="644.6" rx="6.5" ry="3.4" fill="#2a2a2a" stroke="#0a0a0a" stroke-width="0.9"/>
<ellipse cx="1370.7" cy="644.6" rx="6.5" ry="3.4" fill="#2a2a2a" stroke="#0a0a0a" stroke-width="0.9"/>
<path d="M1287.0,657.0 L1381.0,657.0" stroke="#0c0c0c" stroke-width="7" fill="none"/>
<path d="M1287.0,657.0 L1381.0,657.0" stroke="#3a3a3a" stroke-width="5" fill="none"/>
<path d="M1301.3,661.8 L1378.6,661.8" stroke="#5a5a5a" stroke-width="1" fill="none"/>
<ellipse cx="1292.1" cy="657.0" rx="6.5" ry="3.4" fill="#2a2a2a" stroke="#0a0a0a" stroke-width="0.9"/>
<ellipse cx="1332.0" cy="657.0" rx="6.5" ry="3.4" fill="#2a2a2a" stroke="#0a0a0a" stroke-width="0.9"/>
<ellipse cx="1374.5" cy="657.0" rx="6.5" ry="3.4" fill="#2a2a2a" stroke="#0a0a0a" stroke-width="0.9"/>
<path d="M1290.6,669.4 L1384.8,669.4" stroke="#0c0c0c" stroke-width="7" fill="none"/>
<path d="M1290.6,669.4 L1384.8,669.4" stroke="#3a3a3a" stroke-width="5" fill="none"/>
<path d="M1304.9,674.2 L1382.5,674.2" stroke="#5a5a5a" stroke-width="1" fill="none"/>
<ellipse cx="1295.8" cy="669.4" rx="6.5" ry="3.4" fill="#2a2a2a" stroke="#0a0a0a" stroke-width="0.9"/>
<ellipse cx="1335.8" cy="669.4" rx="6.5" ry="3.4" fill="#2a2a2a" stroke="#0a0a0a" stroke-width="0.9"/>
<ellipse cx="1378.4" cy="669.4" rx="6.5" ry="3.4" fill="#2a2a2a" stroke="#0a0a0a" stroke-width="0.9"/>
<path d="M1294.2,681.8 L1388.7,681.8" stroke="#0c0c0c" stroke-width="7" fill="none"/>
<path d="M1294.2,681.8 L1388.7,681.8" stroke="#3a3a3a" stroke-width="5" fill="none"/>
<path d="M1308.6,686.6 L1386.3,686.6" stroke="#5a5a5a" stroke-width="1" fill="none"/>
<ellipse cx="1299.4" cy="681.8" rx="6.5" ry="3.4" fill="#2a2a2a" stroke="#0a0a0a" stroke-width="0.9"/>
<ellipse cx="1339.5" cy="681.8" rx="6.5" ry="3.4" fill="#2a2a2a" stroke="#0a0a0a" stroke-width="0.9"/>
<ellipse cx="1382.2" cy="681.8" rx="6.5" ry="3.4" fill="#2a2a2a" stroke="#0a0a0a" stroke-width="0.9"/>
<path d="M1297.8,694.2 L1392.5,694.2" stroke="#0c0c0c" stroke-width="7" fill="none"/>
<path d="M1297.8,694.2 L1392.5,694.2" stroke="#3a3a3a" stroke-width="5" fill="none"/>
<path d="M1312.2,699.0 L1390.1,699.0" stroke="#5a5a5a" stroke-width="1" fill="none"/>
<ellipse cx="1303.0" cy="694.2" rx="6.5" ry="3.4" fill="#2a2a2a" stroke="#0a0a0a" stroke-width="0.9"/>
<ellipse cx="1343.2" cy="694.2" rx="6.5" ry="3.4" fill="#2a2a2a" stroke="#0a0a0a" stroke-width="0.9"/>
<ellipse cx="1386.1" cy="694.2" rx="6.5" ry="3.4" fill="#2a2a2a" stroke="#0a0a0a" stroke-width="0.9"/>
<path d="M1278.0,728 L1278.0,741" stroke="#0a0a0a" stroke-width="1.4" fill="none"/>
<path d="M1281.0,728 L1281.0,741" stroke="#0a0a0a" stroke-width="1.4" fill="none"/>
<path d="M1283.9,728 L1283.9,741" stroke="#0a0a0a" stroke-width="1.4" fill="none"/>
<path d="M1286.8,728 L1286.8,741" stroke="#0a0a0a" stroke-width="1.4" fill="none"/>
<path d="M1289.8,728 L1289.8,741" stroke="#0a0a0a" stroke-width="1.4" fill="none"/>
<path d="M1292.8,728 L1292.8,741" stroke="#0a0a0a" stroke-width="1.4" fill="none"/>
<path d="M1295.7,728 L1295.7,741" stroke="#0a0a0a" stroke-width="1.4" fill="none"/>
<path d="M1298.7,728 L1298.7,741" stroke="#0a0a0a" stroke-width="1.4" fill="none"/>
<path d="M1301.6,728 L1301.6,741" stroke="#0a0a0a" stroke-width="1.4" fill="none"/>
<path d="M1304.5,728 L1304.5,741" stroke="#0a0a0a" stroke-width="1.4" fill="none"/>
<path d="M1307.5,728 L1307.5,741" stroke="#0a0a0a" stroke-width="1.4" fill="none"/>
<path d="M1310.5,728 L1310.5,741" stroke="#0a0a0a" stroke-width="1.4" fill="none"/>
<path d="M1313.4,728 L1313.4,741" stroke="#0a0a0a" stroke-width="1.4" fill="none"/>
<path d="M1316.3,728 L1316.3,741" stroke="#0a0a0a" stroke-width="1.4" fill="none"/>
<path d="M1319.3,728 L1319.3,741" stroke="#0a0a0a" stroke-width="1.4" fill="none"/>
<path d="M1322.2,728 L1322.2,741" stroke="#0a0a0a" stroke-width="1.4" fill="none"/>
<path d="M1325.2,728 L1325.2,741" stroke="#0a0a0a" stroke-width="1.4" fill="none"/>
<path d="M1328.2,728 L1328.2,741" stroke="#0a0a0a" stroke-width="1.4" fill="none"/>
<path d="M1331.1,728 L1331.1,741" stroke="#0a0a0a" stroke-width="1.4" fill="none"/>
<path d="M1334.0,728 L1334.0,741" stroke="#0a0a0a" stroke-width="1.4" fill="none"/>
<path d="M1337.0,728 L1337.0,741" stroke="#0a0a0a" stroke-width="1.4" fill="none"/>
<path d="M1340.0,728 L1340.0,741" stroke="#0a0a0a" stroke-width="1.4" fill="none"/>
<path d="M1342.9,728 L1342.9,741" stroke="#0a0a0a" stroke-width="1.4" fill="none"/>
<path d="M1345.8,728 L1345.8,741" stroke="#0a0a0a" stroke-width="1.4" fill="none"/>
<path d="M1348.8,728 L1348.8,741" stroke="#0a0a0a" stroke-width="1.4" fill="none"/>
<path d="M1351.8,728 L1351.8,741" stroke="#0a0a0a" stroke-width="1.4" fill="none"/>
<path d="M1354.7,728 L1354.7,741" stroke="#0a0a0a" stroke-width="1.4" fill="none"/>
<path d="M1357.7,728 L1357.7,741" stroke="#0a0a0a" stroke-width="1.4" fill="none"/>
<path d="M1360.6,728 L1360.6,741" stroke="#0a0a0a" stroke-width="1.4" fill="none"/>
<path d="M1363.5,728 L1363.5,741" stroke="#0a0a0a" stroke-width="1.4" fill="none"/>
<path d="M1366.5,728 L1366.5,741" stroke="#0a0a0a" stroke-width="1.4" fill="none"/>
<path d="M1369.5,728 L1369.5,741" stroke="#0a0a0a" stroke-width="1.4" fill="none"/>
<path d="M1372.4,728 L1372.4,741" stroke="#0a0a0a" stroke-width="1.4" fill="none"/>
<path d="M1375.3,728 L1375.3,741" stroke="#0a0a0a" stroke-width="1.4" fill="none"/>
<path d="M1378.3,728 L1378.3,741" stroke="#0a0a0a" stroke-width="1.4" fill="none"/>
<path d="M1381.2,728 L1381.2,741" stroke="#0a0a0a" stroke-width="1.4" fill="none"/>
<path d="M1384.2,728 L1384.2,741" stroke="#0a0a0a" stroke-width="1.4" fill="none"/>
<path d="M1387.2,728 L1387.2,741" stroke="#0a0a0a" stroke-width="1.4" fill="none"/>
<path d="M1390.1,728 L1390.1,741" stroke="#0a0a0a" stroke-width="1.4" fill="none"/>
<path d="M1393.0,728 L1393.0,741" stroke="#0a0a0a" stroke-width="1.4" fill="none"/>
<path d="M1396.0,728 L1396.0,741" stroke="#0a0a0a" stroke-width="1.4" fill="none"/>
<path d="M1399.0,728 L1399.0,741" stroke="#0a0a0a" stroke-width="1.4" fill="none"/>
<path d="M1388,640 L1424,726 M1392,640 L1427,724 M1396,648 L1428,722" stroke="#111" stroke-width="1" stroke-dasharray="1,2" fill="none"/>
  <!-- front rail posts -->
  <g stroke-width="0.800" fill="#c2c214">
    <rect x="1191.500" y="727" width="5" height="28"/>
    <rect x="1245" y="727" width="5" height="29"/>
    <rect x="1299" y="727" width="5" height="29"/>
    <rect x="1352.500" y="726" width="5" height="29"/>
    <rect x="1413.500" y="719" width="5" height="29"/>
    <rect x="1452.500" y="700" width="5" height="30"/>
  </g>
  <g stroke-width="0.700" fill="#d6d610">
    <ellipse cx="1194" cy="755" rx="4" ry="1.6"/><ellipse cx="1247.500" cy="756" rx="4" ry="1.6"/><ellipse cx="1301.500" cy="756" rx="4" ry="1.6"/><ellipse cx="1355" cy="755" rx="4" ry="1.6"/><ellipse cx="1416" cy="748" rx="4" ry="1.6"/><ellipse cx="1455" cy="730" rx="4" ry="1.6"/>
  </g>
  <!-- front rail -->
  <path d="M1158,725.500 L1357,722.500 Q1400,719 1430,710 Q1458,700 1464,686" fill="none" stroke="#000" stroke-width="6.400"/>
  <path d="M1158,725.500 L1357,722.500 Q1400,719 1430,710 Q1458,700 1464,686" fill="none" stroke="#bcbc10" stroke-width="4.600"/>
</g>

<!-- s40_cab.svg -->
<g id="cab" stroke="#000" stroke-width="1" stroke-linejoin="round" stroke-linecap="round">
  <!-- windshield edge strip (grey) -->
  <path d="M961,618 Q952,645 947,670 Q941,700 937.500,735 Q935,760 934.500,790 L942,800 L944,760 Q948,720 957,670 Q962,645 968,620 Z" fill="#434547" stroke-width="1"/>
  <!-- black frame -->
  <path d="M967,619 L1133,619 L1139,650 L1141,754 L1108,755 Q1098,790 1060,808 Q1010,828 954,833 L957,880 L944,882 Q939,840 940.500,800 Q942,760 948,720 Q955,670 967,619 Z" fill="#000"/>
  <!-- left glass -->
  <path d="M991,624 L1057,624 L1057,800 L985,812 L961,812 L961.500,757 Q966,732 975,705 Q985,672 988,650 Z" fill="#cbced1" stroke="none"/>
  <path d="M1040,624 L1057,624 L1057,760 L1030,766 Z" fill="#c2c5c8" stroke="none"/>
  <!-- right glass -->
  <path d="M1068,624 L1106,624 Q1113,660 1114,690 Q1113,712 1104,732 Q1090,760 1068,782 Z" fill="#b9bcbf" stroke="none"/>
  <path d="M1068,624 L1099,624 Q1106,660 1106,690 Q1104,712 1096,730 Q1084,756 1068,772 Z" fill="#cfd2d5" stroke="none"/>
  <path d="M1106,690 Q1104,712 1096,730 Q1084,756 1068,772 L1068,782 Q1090,760 1104,732 Q1113,712 1114,690 Z" fill="#a9abae" stroke="none"/>
  <!-- interior dark -->
  <path d="M961.500,757 Q1000,774 1057,757 L1057,806 Q1010,826 954,833 Z" fill="#3b3b3b" stroke="none"/>
  <path d="M1068,782 Q1090,762 1104,736 L1108,755 Q1098,788 1068,804 Z" fill="#8e9092" stroke="none"/>
  <!-- floor yellow -->
  <path d="M1001,800 L1028,791 L1028,804 L1001,806 Z" fill="#e0e000" stroke="none"/>
  <!-- seat (olive) -->
  <path d="M1030,763 Q1030,761 1033,761.500 L1058,764 L1058,792 L1032,789 Q1026,776 1030,763 Z" fill="#8f8f00" stroke-width="0.700"/>
  <path d="M1033,780 L1058,783 L1058,792 L1032,789 Z" fill="#c6c600" stroke="none"/>
  <path d="M1032,789 L1030,812 M1036,790 L1036,808" fill="none" stroke="#222" stroke-width="0.700"/>
  <!-- console -->
  <path d="M960,800 Q962,794 970,793 L990,800 Q998,804 996,812 L990,820 L958,828 Z" fill="#4c4c4c" stroke-width="0.600"/>
  <path d="M962,797 L975,770 L985,776 L990,800" fill="#333" stroke="none"/>
  <!-- column -->
  <path d="M1003,738 L1016,744 L996,800 L984,794 Z" fill="#2e2e2e" stroke="none"/>
  <path d="M1003,736 L980.500,781.500" stroke="#1a1a00" stroke-width="5.200" fill="none" stroke-linecap="round"/>
  <path d="M1003,736 L980.500,781.500" stroke="#dcdc00" stroke-width="3.600" fill="none" stroke-linecap="round"/>
  <path d="M1016,743 L993.500,790" stroke="#1a1a00" stroke-width="4.800" fill="none" stroke-linecap="round"/>
  <path d="M1016,743 L993.500,790" stroke="#dcdc00" stroke-width="3.200" fill="none" stroke-linecap="round"/>
  <!-- steering wheel -->
  <ellipse cx="1015.400" cy="729" rx="27" ry="8.500" transform="rotate(30.500 1015.400 729)" fill="none" stroke="#060606" stroke-width="4.600"/>
  <path d="M1013,712 L1013.500,734 M994,718 L1014,732 L1036,741" stroke="#060606" stroke-width="2.600" fill="none"/>
  <ellipse cx="1014" cy="732" rx="5" ry="3" transform="rotate(30 1014 732)" fill="#060606" stroke="none"/>
  <circle cx="1013" cy="711" r="2.400" fill="#060606" stroke="none"/>
  <!-- centre pillar -->
  <path d="M1058,620 L1068,620 L1068,800 L1058,803 Z" fill="#000" stroke="none"/>
  <!-- door top edge line -->
  <path d="M954,833 Q1030,822 1072,793 Q1100,770 1108,753" fill="none" stroke-width="1.200"/>
  <!-- front yellow guard strip -->
  <path d="M928.500,763 L934,762 Q933,800 936,840 Q938,866 941.500,877 L936.500,878.500 Q932,860 930.500,840 Q927.500,800 928.500,763 Z" fill="#e8e800" stroke-width="0.800"/>
  <path d="M931.300,764 Q930.300,800 933.300,840 Q935,866 939,877.500" fill="none" stroke-width="0.700"/>
  <!-- dotted dark strips -->
  <path d="M923,776 L929,775 L929,813 L923,813 Z" fill="#3a3a3a" stroke-width="0.600"/>
  <path d="M926,779 V811" stroke="#111" stroke-width="1.600" stroke-dasharray="1.600,2.600" fill="none"/>
  <path d="M930,857 L935.500,857 L938,898 L932,898 Z" fill="#3a3a3a" stroke-width="0.600"/>
  <path d="M933,860 L935,896" stroke="#111" stroke-width="1.600" stroke-dasharray="1.600,2.600" fill="none"/>
  <!-- roof -->
  <path d="M954.500,570 Q954,567 957,567 L980,567.500 Q991,570 994,578 L1112,576 Q1123,578 1126,587 L1131,615 Q1131.500,620 1127,620.500 L968,621 Q959,620 961,614 L958,612 L958,597 L961,596 L961,584 L954.500,582 Z" fill="#f4f400"/>
  <path d="M955,571.500 L979,572 Q988,574 990,582" fill="none" stroke-width="0.900"/>
  <path d="M955,581 L974,582 Q978,584 982,584.500 L992,584" fill="none" stroke-width="0.900"/>
  <path d="M961,584 L976,584 L978,586 L977,596 L961,596" fill="#dada00" stroke-width="0.800"/>
  <path d="M958,597 L978,597 Q992,600 998,612 L958,612.400" fill="#f4f400" stroke-width="0.900"/>
  <path d="M959,601.500 L978,601.500 Q988,604 993,612" fill="none" stroke-width="0.800"/>
  <path d="M978,597 L978,612 M980,567.500 L980,584" fill="none" stroke-width="0.600"/>
  <path d="M962,615.500 L1129,614.500" fill="none" stroke-width="0.800"/>
  <path d="M1112,576 L1119,615" fill="none" stroke-width="0.700"/>
  <!-- skylight box -->
  <path d="M1007.800,575.200 L1014.400,572.500 L1050.500,572.500 L1092,582.300 L1095.300,608 L1094.200,609.700 L1011,610.200 Z" fill="#3a3a3a"/>
  <path d="M1007.800,575.200 L1014.400,572.500 L1017.700,598.700 L1011,604.200 Z" fill="#2c2c2c" stroke-width="0.700"/>
  <path d="M1014.400,572.500 L1050.500,572.500 L1054.300,598.200 L1017.700,598.700 Z" fill="#3d3d3d" stroke-width="0.700"/>
  <path d="M1050.500,572.500 L1092,582.300 L1095.300,608 L1054.300,598.200 Z" fill="#363636" stroke-width="0.700"/>
  <path d="M1011,604.200 L1017.700,598.700 L1054.300,598.200 L1095.300,608" fill="none" stroke="#a8a8a8" stroke-width="1.100"/>
  <!-- front light -->
  <path d="M902.500,820 Q902.500,813.500 908,813.500 L931.500,813.500 L931.500,858 L910,858 Q904,858 903.500,852 Z" fill="#3c3c3c" stroke-width="0.700"/>
  <path d="M908.500,820 Q908.500,815.500 912.500,815 L931.500,814.500 L931.500,856.500 L914,856.500 Q909.500,856.500 909,852 Z" fill="#f6f600" stroke-width="0.700"/>
  <path d="M911,852 Q911,854.500 914,854.500 L931,854.500" fill="none" stroke="#a0a000" stroke-width="1"/>
  <path d="M905.500,820 L906,852" fill="none" stroke="#0c0c0c" stroke-width="1.600" stroke-dasharray="1.600,2.800"/>
</g>

<!-- s50_step.svg -->
<g id="step" stroke="#000" stroke-width="1" stroke-linejoin="round">
  <!-- step plate -->
  <path d="M979,885 Q978,884 981,884 L1086,883 Q1090,884 1090,890 L1088,900 Q1086,904 1080,904 L990,905 Q982,904 980,898 Z" fill="#d4d400" stroke-width="0.9"/>
  <path d="M981,887 L1087,886 L1086,897 L983,898 Z" fill="url(#perf)" stroke="none"/>
</g>

<!-- s90_chrome.svg -->
<defs>
<linearGradient id="tb" x1="0" y1="0" x2="0" y2="1"><stop offset="0" stop-color="#eef0f3"/><stop offset="0.14" stop-color="#dfe1e6"/><stop offset="0.85" stop-color="#dadde3"/><stop offset="1" stop-color="#cdd0d6"/></linearGradient>
<linearGradient id="lg" x1="0" y1="0" x2="0" y2="1"><stop offset="0" stop-color="#3f454e"/><stop offset="0.55" stop-color="#272c34"/><stop offset="1" stop-color="#1c2026"/></linearGradient>
<linearGradient id="pg" x1="0" y1="0" x2="1" y2="1"><stop offset="0" stop-color="#ffffff"/><stop offset="1" stop-color="#c4d8ee"/></linearGradient>
<radialGradient id="lens" cx="0.4" cy="0.35" r="0.7"><stop offset="0" stop-color="#c4c4c4"/><stop offset="0.6" stop-color="#8a8a8a"/><stop offset="1" stop-color="#4e4e4e"/></radialGradient>
<linearGradient id="blu" x1="0" y1="0" x2="1" y2="1"><stop offset="0" stop-color="#8fc0ea"/><stop offset="1" stop-color="#2f6fba"/></linearGradient>
<radialGradient id="shine" cx="0.35" cy="0.3" r="0.8"><stop offset="0" stop-color="#fff" stop-opacity="0.55"/><stop offset="0.5" stop-color="#fff" stop-opacity="0"/><stop offset="1" stop-color="#000" stop-opacity="0.3"/></radialGradient>
</defs>
<g id="chrome">
<rect x="0" y="0" width="1920" height="28" fill="url(#tb)"/>
<rect x="0" y="27" width="1920" height="1" fill="#8e9094"/>
<rect x="0" y="1" width="5.500" height="27" fill="#e3261c"/>
<rect x="5.500" y="1" width="125.500" height="27" fill="url(#lg)"/>
<rect x="131" y="1" width="10" height="27" fill="#9a9ca0"/>
<rect x="139" y="1" width="3" height="27" fill="#c4c6ca"/>
<path d="M134,11 L138,14.500 L134,18 Z" fill="#4c4e52"/>
<!-- 3DS mark -->
<g fill="none" stroke="#fff" stroke-width="1.600" stroke-linecap="round" stroke-linejoin="round">
  <path d="M16.800,4.900 Q24.500,5.500 23.600,7 L19.900,9.600 Q24.200,9.800 23.200,11.400 L19.300,14.600"/>
  <path d="M15.400,14.600 L10.300,23.700 Q19.500,21.500 20.600,18.200 Q21,15.200 15.400,14.600 Z"/>
  <path d="M29.300,11.900 Q23.400,12 23.500,14 Q24,16 27,17.600 Q29,20 26.500,21 L21.800,21.600"/>
</g>
<text x="35.500" y="22.300" font-family="'Liberation Sans',sans-serif" font-size="13.200" font-style="italic" fill="#fff" textLength="84" lengthAdjust="spacingAndGlyphs"><tspan font-weight="bold">SOLID</tspan>WORKS</text>
<text x="1093" y="19" font-family="'Liberation Sans',sans-serif" font-size="11.300" fill="#3c3e42" textLength="95.500" lengthAdjust="spacingAndGlyphs">Digger [Read-only]</text>

<!-- NEW -->
<path d="M174.500,6.500 L182.500,6.500 L187,11 L187,21.500 L174.500,21.500 Z" fill="url(#pg)" stroke="#6f7686" stroke-width="1"/>
<path d="M182.500,6.500 L182.500,11 L187,11" fill="#e8eef6" stroke="#6f7686" stroke-width="0.8"/>
<path d="M195.6,13.5 L201.6,13.5 L198.6,16.8 Z" fill="#2a2a2a"/>
<!-- OPEN disabled -->
<g opacity="0.75">
<path d="M209,21.500 L210,11 L214.500,11 L216,12.500 L222,12.500 L222,21.500 Z" fill="#d0d2d6" stroke="#b4b6ba" stroke-width="1"/>
<path d="M209,21.500 L213,14.500 L226,14.500 L222,21.500 Z" fill="#dcdee2" stroke="#b0b2b6" stroke-width="1"/>
<path d="M217,10 Q220,6 223.500,8.500 M221.500,6.500 L224,8.800 L221,10.500" fill="none" stroke="#b8babe" stroke-width="1.3"/>
</g>
<path d="M231.3,13.5 L237.3,13.5 L234.3,16.8 Z" fill="#a4a6aa"/>
<!-- SAVE -->
<rect x="245" y="6.300" width="15.800" height="15.500" rx="1" fill="#2950c4" stroke="#17308a" stroke-width="0.9"/>
<rect x="246" y="6.800" width="1.800" height="14.500" fill="#5f8cf0"/>
<rect x="248.500" y="6.800" width="9.300" height="7.200" fill="#f4f6fa"/>
<path d="M249.500,8.800 H257 M249.500,10.800 H257 M249.500,12.800 H257" stroke="#9aa0aa" stroke-width="0.8"/>
<rect x="249.500" y="16.300" width="7.500" height="5.200" fill="#e8ecf4"/>
<rect x="250.800" y="16.800" width="3.200" height="4.700" fill="#10246c"/>
<path d="M267.4,13.5 L273.4,13.5 L270.4,16.8 Z" fill="#2a2a2a"/>
<!-- PRINT -->
<path d="M283.500,13 L282.500,6.500 L289.500,6 L292,12 Z" fill="#cfe2f8" stroke="#7f98b8" stroke-width="0.8"/>
<path d="M281.500,13.500 Q281.500,12 283,12 L293,12 Q296,12.500 296,15 L296,19 L292,21.500 L283,19.500 L281.500,18 Z" fill="#e8e8ea" stroke="#55585e" stroke-width="0.9"/>
<path d="M285.500,16 L295.500,16 L295.500,18.500 L291.500,21 L285.500,19 Z" fill="#3a3c40"/>
<path d="M287,18.200 L294.500,18.500 L291.500,20.300 L287,19.200 Z" fill="#f6f6f6"/>
<path d="M303.4,13.5 L309.4,13.5 L306.4,16.8 Z" fill="#2a2a2a"/>
<!-- UNDO disabled -->
<path d="M318,8 L318.500,14.500 L325,13.800 L322.500,11.800 Q327,8 330,12 Q332,16 326.500,20.500 L328.500,21.800 Q335.500,16 332.500,10 Q328,4.500 320.500,9.800 Z" fill="#b4b6ba" stroke="#a6a8ac" stroke-width="0.6"/>
<path d="M339.3,13.5 L345.3,13.5 L342.3,16.8 Z" fill="#a4a6aa"/>
<!-- SELECT -->
<rect x="350.500" y="3.500" width="35" height="22" fill="#e6e8eb" stroke="#7d7f84" stroke-width="1"/>
<rect x="351" y="4" width="21.500" height="21" fill="#b7b9be"/>
<path d="M372.500,4 V25" stroke="#9a9ca0" stroke-width="0.8"/>
<path d="M356.500,6 L356.500,18.500 L359.500,15.800 L362,21.300 L364.200,20.300 L361.700,15 L365.500,14.800 Z" fill="#fff" stroke="#26282c" stroke-width="1" stroke-linejoin="round"/>
<path d="M375.5,13.5 L381.5,13.5 L378.5,16.8 Z" fill="#2a2a2a"/>
<!-- TRAFFIC LIGHT -->
<rect x="393" y="5.800" width="7.800" height="16.400" rx="3.600" fill="#141414"/>
<circle cx="396.900" cy="9.800" r="2.700" fill="#e0252a"/>
<circle cx="396.200" cy="9" r="0.900" fill="#ff8c8c"/>
<circle cx="396.900" cy="17.200" r="2.900" fill="#2fc030"/>
<circle cx="396.200" cy="16.300" r="1" fill="#9af09a"/>
<!-- OPTIONS -->
<rect x="412.500" y="11" width="13" height="10.500" fill="#fbfbfb" stroke="#6a6c70" stroke-width="0.9"/>
<path d="M414.500,14 H423.500 M414.500,16.300 H423.500 M414.500,18.600 H423.500" stroke="#9a9ca0" stroke-width="0.8"/>
<path d="M416,11.500 L420.500,7 L424.500,10.500 L420.500,13.500 Z" fill="#f0c040" stroke="#8a6a20" stroke-width="0.6"/>
<path d="M417.500,10 L419,8.500 L420.500,10 L419,11.500 Z M420.500,10 L422,8.500 L423.500,10 L422,11.500 Z" fill="#7a5a18"/>
<path d="M421,7 Q424,5.200 427.500,6.800 Q429,8 428,9.800 L424.500,10.500 Z" fill="#f0b070" stroke="#8a5a28" stroke-width="0.6"/>
<!-- CHECKLIST -->
<rect x="435.500" y="6.500" width="15" height="13.800" fill="#d3e3f3" stroke="#66788e" stroke-width="1"/>
<rect x="437.500" y="8.300" width="2.200" height="2.200" fill="#fff" stroke="#44546a" stroke-width="0.7"/>
<rect x="437.500" y="12.300" width="2.200" height="2.200" fill="#fff" stroke="#44546a" stroke-width="0.7"/>
<path d="M441.500,9.400 H448 M441.500,13.400 H448 M442.500,17.400 H448" stroke="#3c5a7a" stroke-width="0.9"/>
<path d="M436.800,17 L438.600,19 L441.800,15.800" fill="none" stroke="#128a2a" stroke-width="1.7"/>
<path d="M457.4,13.5 L463.4,13.5 L460.4,16.8 Z" fill="#2a2a2a"/>

<!-- right title controls -->
<path d="M1821.500,12 Q1821.500,8.500 1825.500,8.500 Q1829.500,8.500 1829.500,11.500 Q1829.500,13.500 1827,15 Q1825.500,16 1825.500,17.500" fill="none" stroke="#3a3c40" stroke-width="2.800" stroke-linecap="round"/>
<path d="M1821.500,12 Q1821.500,8.500 1825.500,8.500 Q1829.500,8.500 1829.500,11.500 Q1829.500,13.500 1827,15 Q1825.500,16 1825.500,17.500" fill="none" stroke="#fbfbfb" stroke-width="1.200" stroke-linecap="round"/>
<rect x="1824" y="18.300" width="3" height="2.600" fill="#fbfbfb" stroke="#3a3c40" stroke-width="0.8"/>
<path d="M1840.5,14.0 L1846.5,14.0 L1843.5,17.3 Z" fill="#2a2a2a"/>
<rect x="1856.500" y="16.500" width="11" height="3.500" rx="0.800" fill="#fbfbfb" stroke="#3a3c40" stroke-width="0.9"/>
<rect x="1881.500" y="8.800" width="10.500" height="8.500" fill="#f0f0f2" stroke="#3a3c40" stroke-width="1"/>
<rect x="1877.500" y="12.500" width="11" height="8" fill="#f0f0f2" stroke="#3a3c40" stroke-width="1"/>
<rect x="1879.300" y="14.800" width="7.400" height="3.800" fill="#dfe1e5" stroke="#3a3c40" stroke-width="0.7"/>
<path d="M1903.500,10.300 L1913.500,19 M1913.500,10.300 L1903.500,19" stroke="#3a3c40" stroke-width="3.200" stroke-linecap="butt"/>
<path d="M1903.500,10.300 L1913.500,19 M1913.500,10.300 L1903.500,19" stroke="#fbfbfb" stroke-width="1.500" stroke-linecap="butt"/>

<!-- viewport inner controls -->
<g>
<rect x="1804.500" y="37.500" width="11.500" height="11.500" fill="#a2a2a2"/>
<rect x="1811.500" y="39.300" width="2.300" height="8" fill="#141414"/>
<path d="M1810.500,39.500 L1806.300,43.300 L1810.500,47.200 Z" fill="#141414"/>
<rect x="1827.500" y="37.500" width="11.500" height="11.500" fill="#a2a2a2"/>
<rect x="1829.700" y="39.300" width="2.300" height="8" fill="#141414"/>
<path d="M1833,39.500 L1837.200,43.300 L1833,47.200 Z" fill="#141414"/>
<rect x="1850.500" y="46.300" width="11" height="3.200" fill="#9a9a9a"/>
<path d="M1876,40.500 V38 H1885.500 V45.500 H1883" fill="none" stroke="#9a9a9a" stroke-width="1.300"/>
<rect x="1872" y="41.500" width="10" height="7.500" fill="#0c0c0c" stroke="#9a9a9a" stroke-width="1.300"/>
<path d="M1897.500,38.800 L1907.500,48.200 M1907.500,38.800 L1897.500,48.200" stroke="#a8a8a8" stroke-width="2.300"/>
</g>

<!-- view toolbar -->
<g id="vtb">
<!-- zoom fit -->
<path d="M821.500,44 L827.800,49.300" stroke="#4f80b0" stroke-width="3.400" stroke-linecap="round"/><path d="M822,43.700 L827.500,48.400" stroke="#9cc4e4" stroke-width="1.200" stroke-linecap="round"/>
<circle cx="818.300" cy="40.400" r="5.300" fill="url(#lens)" stroke="#5a5a5a" stroke-width="0.6"/>
<path d="M816,38 l1.600,0 l0,1.600 M820.600,38 l-1.600,0 l0,1.600 M816,42.800 l1.600,0 M820.600,42.800 l-1.600,0" stroke="#3a3a3a" stroke-width="0.9" fill="none"/>
<!-- zoom area -->
<path d="M845.200,44.400 L851.400,49.600" stroke="#4f80b0" stroke-width="3.400" stroke-linecap="round"/><path d="M845.700,44.100 L851.100,48.700" stroke="#9cc4e4" stroke-width="1.200" stroke-linecap="round"/>
<circle cx="842" cy="40.800" r="5.300" fill="url(#lens)" stroke="#6a6a6a" stroke-width="0.6" stroke-dasharray="1.500,1"/>
<path d="M839.500,42.500 h5" stroke="#444" stroke-width="0.9"/>
<!-- previous view -->
<path d="M861.500,38.500 L870.500,47.500" stroke="#5f9ad0" stroke-width="4.600" stroke-linecap="round"/>
<path d="M861.500,38.300 L868,44.800" stroke="#dcecf8" stroke-width="2" stroke-linecap="round"/>
<circle cx="871" cy="48" r="2.200" fill="#c8ccf8"/>
<path d="M875,38 H869 M871,36.200 L868.500,38 L871,39.800" stroke="#3f6ac8" stroke-width="1.300" fill="none"/>
<!-- section view -->
<path d="M883.500,38.500 L889.500,36.800 L896,39.500 L896,48 L892.500,48.500 L892.500,41 L887,40 L887,47.500 L883.500,47 Z" fill="#2f66b8" stroke="#7fb0e8" stroke-width="0.8"/>
<rect x="883.500" y="39" width="2.400" height="8.200" fill="#e8c820"/>
<rect x="892.700" y="41.200" width="2.400" height="7" fill="#e8c820"/>
<path d="M883.500,41 l2.400,1 M883.500,43.500 l2.400,1 M883.500,46 l2.400,1 M892.700,43 l2.400,1 M892.700,45.500 l2.400,1" stroke="#7a5a10" stroke-width="0.7"/>
<!-- view orientation -->
<path d="M910,39 L910,35.500 L921.500,35.500 L921.500,46 L916,46" fill="none" stroke="#2a6a3a" stroke-width="0.9"/>
<path d="M912.500,35.500 V39 M921.500,43 H916" stroke="#a01428" stroke-width="1.100"/>
<rect x="905.500" y="39.200" width="10.300" height="11" fill="url(#blu)" stroke="#2a5a9a" stroke-width="0.7"/>
<path d="M928.7,43.1 L934.7,43.1 L931.7,46.4 Z" fill="#8a8a8a"/>
<!-- display style -->
<path d="M942.500,39.500 L948,36 L957.500,36 L957.500,47 L952.500,50.500 L942.500,50.500 Z" fill="#0a0a0a" stroke="#8a8a8a" stroke-width="0.8"/>
<path d="M948.500,39.500 L952.500,39.500 L952.500,50.500 L948.500,50.500 Z" fill="#6fa8e8"/>
<path d="M952.500,39.500 L957.500,36 L957.500,47 L952.500,50.500 Z" fill="#4a62c8"/>
<path d="M948,36 L957.500,36 L952.500,39.500 L942.500,39.500 Z" fill="#1a1a1a" stroke="#9a9a9a" stroke-width="0.7"/>
<path d="M965.3,42.8 L971.3,42.8 L968.3,46.1 Z" fill="#8a8a8a"/>
<!-- hide/show glasses -->
<path d="M980,42 L983,37.500 L984,38.500 M988.500,43.500 L993.500,41 L994.500,42" fill="none" stroke="#4a4a4a" stroke-width="0.9"/>
<circle cx="981.700" cy="45" r="2.500" fill="#9ab0c8" stroke="#777" stroke-width="0.9"/>
<circle cx="988.800" cy="46.300" r="2.800" fill="#9ab0c8" stroke="#777" stroke-width="0.9"/>
<path d="M1002.4,42.8 L1008.4,42.8 L1005.4,46.1 Z" fill="#8a8a8a"/>
<!-- appearance ball -->
<g>
<path d="M1023.750,43 L1023.750,35.500 A7.500,7.500 0 0 0 1016.250,43 Z" fill="#2f78e0"/>
<path d="M1023.750,43 L1031.250,43 A7.500,7.500 0 0 0 1023.750,35.500 Z" fill="#e02828"/>
<path d="M1023.750,43 L1016.250,43 A7.500,7.500 0 0 0 1023.750,50.500 Z" fill="#28b028"/>
<path d="M1023.750,43 L1023.750,50.500 A7.500,7.500 0 0 0 1031.250,43 Z" fill="#f0d020"/>
<circle cx="1023.750" cy="43" r="7.500" fill="url(#shine)"/>
</g>
<!-- scene -->
<g>
<g fill="#f2f2f2"><rect x="1038.800" y="44" width="2.700" height="2.200"/><rect x="1044.200" y="44" width="2.700" height="2.200"/><rect x="1049.600" y="44" width="2.700" height="2.200"/><rect x="1041.500" y="46.200" width="2.700" height="2.200"/><rect x="1046.900" y="46.200" width="2.700" height="2.200"/><rect x="1052.300" y="46.200" width="2.700" height="2.200"/><rect x="1038.800" y="48.400" width="2.700" height="2.200"/><rect x="1044.200" y="48.400" width="2.700" height="2.200"/><rect x="1049.600" y="48.400" width="2.700" height="2.200"/></g>
<path d="M1047.500,41.300 L1047.500,35 A6.300,6.300 0 0 0 1041.200,41.300 Z" fill="#2f78e0"/>
<path d="M1047.500,41.300 L1053.800,41.300 A6.300,6.300 0 0 0 1047.500,35 Z" fill="#e02828"/>
<path d="M1047.500,41.300 L1041.200,41.300 A6.300,6.300 0 0 0 1047.500,47.600 Z" fill="#28b028"/>
<path d="M1047.500,41.300 L1047.500,47.600 A6.300,6.300 0 0 0 1053.800,41.300 Z" fill="#f0d020"/>
<circle cx="1047.500" cy="41.300" r="6.300" fill="url(#shine)"/>
</g>
<path d="M1062.0,42.8 L1068.0,42.8 L1065.0,46.1 Z" fill="#8a8a8a"/>
<!-- view settings monitor -->
<rect x="1076.500" y="37.500" width="13.500" height="10" fill="#2a2a2a" stroke="#b4b4b4" stroke-width="1.300"/>
<path d="M1078.500,45.500 L1081,41 L1083,43.500 L1085,40.500 L1088,45.500 Z" fill="#c8c8c8"/>
<path d="M1083,47.500 V49.500 M1079,50.300 H1087.500" stroke="#b4b4b4" stroke-width="1.300"/>
<path d="M1083,38.500 L1086,35.800 L1088.500,38 L1085.500,40.500 Z" fill="#d8b040"/>
<path d="M1085.500,36 Q1088.500,34.500 1091.500,36 L1091.500,38 L1088,38.500 Z" fill="#e0a060"/>
<path d="M1099.5,42.8 L1105.5,42.8 L1102.5,46.1 Z" fill="#8a8a8a"/>
</g>

<!-- left edge + handle -->
<rect x="0" y="28" width="1" height="1052" fill="#b8b8b8"/>
<rect x="1" y="28" width="1" height="1052" fill="#1a1a1a"/>
<rect x="2" y="28" width="1" height="1052" fill="#e8e8e8"/>
<rect x="3" y="28" width="1" height="1052" fill="#2a2a2a"/>
<rect x="0" y="535.500" width="10" height="38" fill="#111"/>
<rect x="0" y="536.500" width="9" height="36" fill="#e4e6ea"/>
<path d="M6.800,543.500 L3.800,545.700 L6.800,548 Z M6.800,552.500 L3.800,554.700 L6.800,557 Z M6.800,561.500 L3.800,563.700 L6.800,566 Z" fill="#3a3a3a"/>
<!-- right edge -->
<rect x="1918" y="28" width="2" height="1052" fill="#3a3a3a"/>
<!-- bottom edge -->
<rect x="0" y="1078" width="1920" height="1" fill="#163a5c"/>
<rect x="0" y="1079" width="1920" height="1" fill="#8fbce0"/>

<!-- triad -->
<g id="triad">
<path d="M38.500,1024 V1008" stroke="#168a1a" stroke-width="3.200"/>
<path d="M36.800,1008 L38.800,997.500 L40.800,1008 Z" fill="#7fe07f" stroke="#168a1a" stroke-width="0.5"/>
<path d="M40,1025.500 L58,1028.500" stroke="#e01818" stroke-width="3.400"/>
<path d="M57,1026 L66.500,1029.800 L56.500,1031 Z" fill="#ff9a8a" stroke="#e01818" stroke-width="0.5"/>
<path d="M38.500,1026 L30,1033" stroke="#1818d8" stroke-width="3.600"/>
<path d="M32.500,1030 L26.500,1036.500 L34.500,1034.500 Z" fill="#2828f0"/>
<text x="34.500" y="994" font-family="'Liberation Sans',sans-serif" font-size="7" fill="#168a1a">Y</text>
<text x="66.500" y="1033" font-family="'Liberation Sans',sans-serif" font-size="7.500" fill="#e01818">X</text>
<text x="24" y="1041" font-family="'Liberation Sans',sans-serif" font-size="7.500" fill="#1818d8">Z</text>
</g>
<text x="15" y="1078.300" font-family="'Liberation Sans',sans-serif" font-size="13.600" fill="#0c0c0c" textLength="68" lengthAdjust="spacingAndGlyphs">*Dimetric</text>
</g>

</svg>

</body>
</html>
